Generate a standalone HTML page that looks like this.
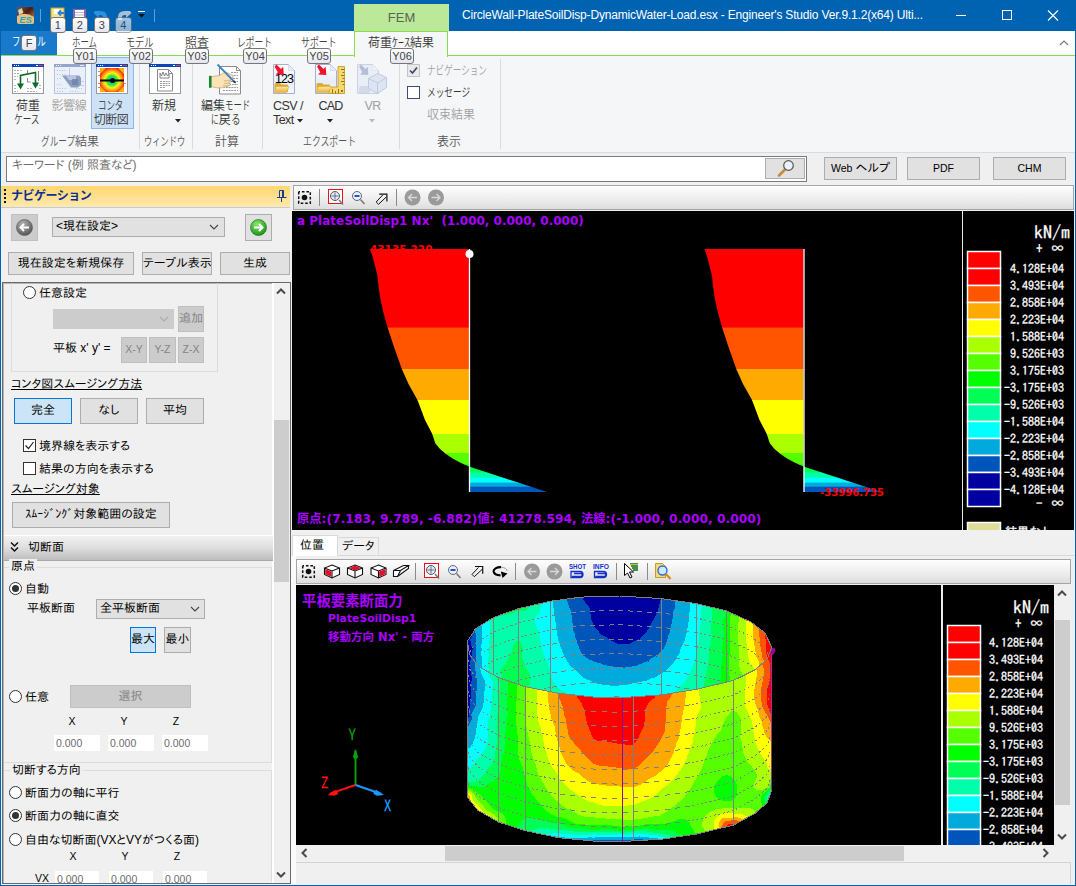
<!DOCTYPE html>
<html lang="ja">
<head>
<meta charset="utf-8">
<title>Engineer's Studio</title>
<style>
*{box-sizing:border-box;margin:0;padding:0}
html,body{width:1076px;height:886px;overflow:hidden;background:#f0f0f0}
body{position:relative;font-family:"Liberation Sans","Noto Sans CJK JP",sans-serif;font-size:12px;color:#000}
.a{position:absolute}
.ui{font-family:"Liberation Sans","IPAPGothic","IPAGothic","Noto Sans CJK JP",sans-serif;font-size:12px;white-space:nowrap}
.rb{font-family:"Liberation Sans","Noto Sans CJK JP",sans-serif;font-size:12px;white-space:nowrap}
.c{text-align:center}
.l{font-size:10.500px!important}
.btn{position:absolute;background:#e1e1e1;border:1px solid #adadad;text-align:center;white-space:nowrap;overflow:hidden}
.btn.sel{background:#cce4f7;border-color:#0078d7}
.btn.dis{background:#cccccc;border-color:#bfbfbf;color:#838383}
.kt{position:absolute;z-index:5;height:16px;border:1px solid #767676;border-radius:3px;background:linear-gradient(#ffffff,#e4e5f0);color:#444;font-size:11px;line-height:14px;text-align:center;font-family:"Liberation Sans",sans-serif}
.tab{position:absolute;font-weight:350;top:31px;height:24px;line-height:24.500px;font-size:12px;color:#444;white-space:nowrap}
.sep{position:absolute;top:59px;width:1px;height:90px;background:#dadbdc}
.gl{position:absolute;font-weight:350;top:134px;height:16px;line-height:16px;font-size:12px;color:#555;text-align:center;white-space:nowrap}
.lb{position:absolute;font-weight:350;font-size:12px;line-height:14px;text-align:center;color:#333;white-space:nowrap}
.lb.d{color:#a0a0a0}
.radio{position:absolute;width:13px;height:13px;border:1px solid #333;border-radius:50%;background:#fff}
.radio.on::after{content:"";position:absolute;left:2px;top:2px;width:7px;height:7px;border-radius:50%;background:#333}
.chk{position:absolute;width:13px;height:13px;border:1px solid #333;background:#fff}
.inp{position:absolute;background:#fff;color:#6d6d6d;height:16px;line-height:16px;padding-left:2px}
.grp{position:absolute;border:1px solid #dcdcdc}
.lg{font-family:"IPAGothic","Liberation Mono",monospace;color:#fff;white-space:pre;position:absolute;-webkit-text-stroke:.3px #fff}
.pt{font-family:"DejaVu Sans","Noto Sans CJK JP",sans-serif;font-weight:bold;color:#a0f;white-space:pre;position:absolute}
</style>
</head>
<body>
<!-- ===== title bar ===== -->
<div class="a" id="titlebar" style="left:0;top:0;width:1076px;height:31px;background:#0063b1"></div>
<div class="a" id="fem" style="left:354px;top:4px;width:95px;height:27px;background:#bce89a;color:#5a6654;font-size:13px;line-height:27px;text-align:center">FEM</div>
<div class="a rb" id="title" style="left:462px;top:7px;color:#fff;font-size:12px;letter-spacing:-.18px;line-height:16px">CircleWall-PlateSoilDisp-DynamicWater-Load.esx - Engineer's Studio Ver.9.1.2(x64) Ulti...</div>
<!-- app icon -->
<svg class="a" style="left:17px;top:7px" width="17" height="17" viewBox="0 0 17 17">
<defs><linearGradient id="ai" x1="0" y1="0" x2="1" y2="1"><stop offset="0" stop-color="#7a5a50"/><stop offset=".45" stop-color="#4a1a14"/><stop offset="1" stop-color="#d6a260"/></linearGradient></defs>
<rect x="0" y="0" width="17" height="17" rx="2.5" fill="url(#ai)"/>
<path d="M0 9 Q8 4 17 10 V15 Q17 17 15 17 H2 Q0 17 0 15Z" fill="#e9c07a"/>
<path d="M1 3 L5 1 L6 6 L2 8Z" fill="#cfcfcf"/><circle cx="5" cy="5" r="1.3" fill="#f5e04a"/>
<text x="8.5" y="15.5" font-family="Liberation Sans,sans-serif" font-size="9.5" font-weight="bold" font-style="italic" fill="#22a9c9" text-anchor="middle">ES</text>
</svg>
<div class="a" style="left:40px;top:9px;width:1px;height:13px;background:#5f9fd4"></div>
<!-- QAT icons -->
<svg class="a" style="left:50px;top:7px" width="90" height="16" viewBox="0 0 90 16">
<rect x="1" y="1" width="13" height="14" fill="#f7e28b" stroke="#caa53a" stroke-width="1"/><rect x="4" y="2" width="5" height="5" fill="#fff"/><path d="M15 6 H9 M11 3.5 L8.5 6 L11 8.5" stroke="#2b7fe0" stroke-width="2" fill="none"/>
<rect x="23" y="2" width="13" height="13" fill="#8e63c0"/><rect x="25" y="3" width="9" height="9" fill="#fff"/><path d="M25 5.5h9M25 8h9M25 10.5h9" stroke="#b9b9c9" stroke-width="1"/>
<path d="M45 4 L50 4 Q57 4 57 10 L57 13 L53 13 L53 10 Q53 8 50 8 L49 8 L49 11 L43.5 6Z" fill="#2f8fe0"/>
<path d="M80 4 L75 4 Q68 4 68 10 L68 13 L72 13 L72 10 Q72 8 75 8 L76 8 L76 11 L81.5 6Z" fill="#a9bfd6"/>
</svg>
<div class="kt" style="left:49.500px;top:16.500px;width:16.500px">1</div>
<div class="kt" style="left:71.500px;top:16.500px;width:16.500px">2</div>
<div class="kt" style="left:93.500px;top:16.500px;width:16.500px">3</div>
<div class="kt" style="left:115px;top:16.500px;width:16.500px;opacity:.62">4</div>
<svg class="a" style="left:137px;top:10px" width="10" height="10" viewBox="0 0 10 10"><path d="M1 1.5h7" stroke="#fff" stroke-width="1"/><path d="M1 4h7l-3.5 3.5z" fill="#111"/></svg>
<div class="a" style="left:154px;top:9px;width:1px;height:13px;background:#5f9fd4"></div>
<!-- window controls -->
<svg class="a" style="left:940px;top:0" width="136" height="31" viewBox="0 0 136 31">
<path d="M16 15.5h10" stroke="#fff" stroke-width="1"/>
<rect x="62.5" y="10.5" width="9" height="9" fill="none" stroke="#fff" stroke-width="1"/>
<path d="M108 10.5l10 10M118 10.5l-10 10" stroke="#fff" stroke-width="1.1"/>
</svg>
<!-- ===== ribbon tabs ===== -->
<div class="a" id="tabrow" style="left:1px;top:31px;width:1074px;height:24px;background:#fff"></div>
<div class="a" style="left:1px;top:55px;width:1074px;height:1px;background:#8add4a"></div>
<div class="a" id="ribbon" style="left:1px;top:56px;width:1074px;height:97px;background:#f5f6f7;border-bottom:1px solid #dadbdc"></div>
<div class="a" id="filetab" style="left:1px;top:31px;width:56px;height:24px;background:#1979ca;color:#fff;font-size:12px;line-height:23px;padding-left:11px;white-space:nowrap"><span style="display:inline-block;transform:scaleX(0.7);transform-origin:0 50%;margin-right:-14.4px">ファイル</span></div>
<div class="tab" style="left:72px"><span style="display:inline-block;transform:scaleX(0.7);transform-origin:0 50%;margin-right:-10.8px">ホーム</span></div>
<div class="tab" style="left:126px"><span style="display:inline-block;transform:scaleX(0.76);transform-origin:0 50%;margin-right:-8.6px">モデル</span></div>
<div class="tab" style="left:185px">照査</div>
<div class="tab" style="left:237px"><span style="display:inline-block;transform:scaleX(0.73);transform-origin:0 50%;margin-right:-13.0px">レポート</span></div>
<div class="tab" style="left:301px"><span style="display:inline-block;transform:scaleX(0.74);transform-origin:0 50%;margin-right:-12.5px">サポート</span></div>
<div class="a" id="acttab" style="left:354px;top:31px;width:94px;height:26px;background:#f5f6f7;border:1px solid #8add4a;border-bottom:none"></div>
<div class="a" style="left:355px;top:55px;width:92px;height:1px;background:#f5f6f7"></div>
<div class="tab" style="left:368px;color:#333">荷重ｹｰｽ結果</div>
<div class="kt" style="left:21px;top:35px;width:16px">F</div>
<div class="kt" style="left:73px;top:48px;width:24px">Y01</div>
<div class="kt" style="left:129px;top:48px;width:24px">Y02</div>
<div class="kt" style="left:185px;top:48px;width:24px">Y03</div>
<div class="kt" style="left:243px;top:48px;width:24px">Y04</div>
<div class="kt" style="left:307px;top:48px;width:24px">Y05</div>
<div class="kt" style="left:390px;top:48px;width:24px">Y06</div>
<svg class="a" style="left:1059px;top:39px" width="10" height="8" viewBox="0 0 10 8"><path d="M1 6l4-4 4 4" stroke="#777" stroke-width="1.2" fill="none"/></svg>
<!-- ===== ribbon body ===== -->
<div class="a" style="left:91px;top:57px;width:43px;height:72px;background:#cde2f6;border:1px solid #8db5e6"></div>
<!-- icon: load case -->
<svg class="a" style="left:12px;top:64px" width="32" height="30" viewBox="0 0 32 30">
<rect x=".5" y=".5" width="31" height="29" fill="#fff" stroke="#9a9a9a"/><rect x="0" y="0" width="32" height="3" fill="#0c46b8"/><rect x="27" y="1" width="4" height="1" fill="#f33"/><path d="M2 1.5h1M4 1.5h1M6 1.5h1M24 1.5h2" stroke="#fff" stroke-width="1"/>
<path d="M2 6.5h9M2 9.5h6M2 12.5h4M2 15.5h3M2 21.5h2M2 24.5h3M2 27.5h4M15 24.5h6M15 27.5h10M24 21.5h5M27 24.5h3" stroke="#b4b4b4" stroke-width="1" stroke-dasharray="2 1"/>
<path d="M15.5 6v4M26.5 7v10M15.5 14v4h3" stroke="#8a8a8a" stroke-width="1" fill="none"/>
<path d="M8.500 20V11.500L23.500 8.500V19" stroke="#0f6a25" stroke-width="1.6" fill="none"/>
<path d="M5 19.5h7L8.500 25.500zM20 18.500h7L23.500 24.500z" fill="#0f6a25"/>
</svg>
<!-- icon: influence line (disabled) -->
<svg class="a" style="left:54px;top:64px" width="32" height="30" viewBox="0 0 32 30">
<rect x=".5" y=".5" width="31" height="29" fill="#eaf0fb" stroke="#b9c3dc"/><rect x="0" y="0" width="32" height="3" fill="#95a5cb"/><path d="M2 1.5h1M4 1.5h1M6 1.5h1M26 1.5h4" stroke="#eef" stroke-width="1"/>
<path d="M3 6.500h9M3 10.500h9M3 14.500h4M3 20.500h5M3 24.500h10M3 27.500h7M16 27.500h10M22 24.500h6" stroke="#b6c2dd" stroke-width="1" stroke-dasharray="1 1.5"/>
<path d="M15.500 4v10M24 17.500h6M24 21.500h6" stroke="#c3cde6" stroke-width="1"/>
<path d="M8 11.500h17l2 2v7l-3 3h-7z" fill="#8d9dbd"/><path d="M12 12h10v4h-7z" fill="#b9c6df"/><rect x="18" y="15" width="6" height="6" fill="#6f82aa" opacity=".8"/>
</svg>
<!-- icon: contour section -->
<svg class="a" style="left:96px;top:64px" width="32" height="30" viewBox="0 0 32 30">
<defs><radialGradient id="cg" cx=".5" cy=".52" r=".62"><stop offset="0" stop-color="#0a2a8a"/><stop offset=".12" stop-color="#14c4d6"/><stop offset=".3" stop-color="#27e23a"/><stop offset=".5" stop-color="#f4f41a"/><stop offset=".68" stop-color="#ff9a10"/><stop offset=".86" stop-color="#ff2a10"/><stop offset="1" stop-color="#f01010"/></radialGradient></defs>
<rect x=".5" y=".5" width="31" height="29" fill="#fff" stroke="#9a9a9a"/><rect x="0" y="0" width="32" height="3" fill="#0c46b8"/><rect x="27" y="1" width="4" height="1" fill="#f33"/><path d="M2 1.5h1M4 1.5h1M6 1.5h1M24 1.5h2" stroke="#fff" stroke-width="1"/>
<rect x="4" y="4" width="24" height="24" fill="url(#cg)"/>
<path d="M4 4h6l-6 6zM28 4h-6l6 6zM4 28h6l-6-6zM28 28h-6l6-6z" fill="#ffe21a" opacity=".75"/>
<path d="M2 7.500h2M2 11.500h2M2 19.500h2M2 23.500h2M28 19.500h2" stroke="#999" stroke-width="1"/>
<path d="M4 16.500h24" stroke="#000" stroke-width="2"/><circle cx="16.500" cy="16.500" r="2.600" fill="#000"/>
</svg>
<!-- icon: new window -->
<svg class="a" style="left:149px;top:64px" width="32" height="30" viewBox="0 0 32 30">
<rect x=".5" y=".5" width="31" height="29" fill="#fff" stroke="#9a9a9a"/><rect x="0" y="0" width="32" height="3" fill="#0c46b8"/><rect x="27" y="1" width="4" height="1" fill="#f33"/><path d="M2 1.5h1M4 1.5h1M6 1.5h1M24 1.5h2" stroke="#fff" stroke-width="1"/>
<path d="M8.500 5.500h11l4 4v17.500h-15z" fill="#fff" stroke="#8a8a8a"/><path d="M19.500 5.500v4h4" fill="none" stroke="#8a8a8a"/>
<path d="M11 14v-5l1.500 3 1.500-4 1.500 4 1.500-3 1.500 3 1.500-2v4z" fill="none" stroke="#777" stroke-width=".9"/>
<path d="M11 17.500h10M11 19.500h10M11 21.500h10M11 23.500h5" stroke="#999" stroke-width="1" stroke-dasharray="2 .8"/>
</svg>
<!-- icon: edit mode (hand + doc) -->
<svg class="a" style="left:209px;top:63px" width="33" height="32" viewBox="0 0 33 32">
<path d="M10.500 3.500h17l4 4v23.500h-21z" fill="#fff" stroke="#8a8a8a"/><path d="M27.500 3.500v4h4" fill="none" stroke="#8a8a8a"/>
<path d="M22 9.500h7M22 12.500h7M24 15.500h5M22 18.500h7M20 21.500h9M14 24.500h15M14 27.500h15" stroke="#999" stroke-width="1" stroke-dasharray="2 .8"/>
<g transform="translate(0,1.300)"><path d="M2 12.500l9-1.500 5-3.500 8 3.500v3l-3 1v6l-7 2.500h-7l-5-1.500z" fill="#fbe3b5" stroke="#caa97a" stroke-width=".8"/>
<path d="M15 16.500h7M15 19h6M14 21.500h6" stroke="#caa97a" stroke-width=".8"/>
<rect x="0" y="11.500" width="2.500" height="12" fill="#118a2e"/></g>
<path d="M8.500 1.500L25.500 19" stroke="#3f86c4" stroke-width="1.800"/><path d="M24.500 18l2 2" stroke="#223" stroke-width="1.500"/>
</svg>
<!-- icon: CSV -->
<svg class="a" style="left:272px;top:63px" width="26" height="32" viewBox="0 0 26 32">
<defs><linearGradient id="dg" x1="0" y1="0" x2="0" y2="1"><stop offset="0" stop-color="#fff"/><stop offset=".6" stop-color="#e6edf9"/><stop offset="1" stop-color="#f6f9ff"/></linearGradient><linearGradient id="fg" x1="0" y1="0" x2="0" y2="1"><stop offset="0" stop-color="#fbe9a0"/><stop offset="1" stop-color="#e6b23a"/></linearGradient></defs>
<path d="M1.500 1.500h15l6 6v23h-21z" fill="url(#dg)" stroke="#a8add2"/><path d="M16.500 1.500v6h6z" fill="#e9eefc" stroke="#c8cde6" stroke-width=".6"/>
<path d="M2.500 3.500L4.500 1.500 9 6 11.200 3.800 11.800 12 3.600 11.400 5.800 9.200z" fill="#f0142c"/>
<text x="12" y="20" font-family="Liberation Sans,sans-serif" font-size="12.500" fill="#000" text-anchor="middle" letter-spacing="-.9">123</text>
<path d="M2.500 21.500q0-1.500 1.500-1.500h4l1.500 1.500h5.500q1 0 1 1v6.500h-13.500z" fill="#e0aa2e"/><path d="M4 23.500h13l-2.500 6h-12z" fill="url(#fg)" stroke="#d9a52c" stroke-width=".5"/>
</svg>
<!-- icon: CAD -->
<svg class="a" style="left:314px;top:63px" width="31" height="32" viewBox="0 0 31 32">
<path d="M1.500 1.500h15l6 6v23h-21z" fill="url(#dg)" stroke="#a8add2"/><path d="M16.500 1.500v6h6z" fill="#e9eefc" stroke="#c8cde6" stroke-width=".6"/>
<path d="M24 3.500h6.500v27h-15.500v-6.500h9z" fill="#f6d96e" stroke="#c79d2b" stroke-width=".9"/>
<path d="M27 6.500h3.500M28.500 9.500h2M27 12.500h3.500M28.500 15.500h2M27 18.500h3.500M28.500 21.500h2M18.500 26v4.500M21.500 28v2.500M24.500 26v4.500" stroke="#8a6a12" stroke-width=".9"/><circle cx="28" cy="28" r="1" fill="#6b5210"/>
<path d="M3 3.500L5 1.500 9.500 6 11.700 3.800 12.300 12 4.100 11.400 6.300 9.200z" fill="#f0142c"/>
<path d="M2.500 21.500q0-1.500 1.500-1.500h4l1.500 1.500h5.500q1 0 1 1v6.500h-13.500z" fill="#e0aa2e"/><path d="M4 23.500h13l-2.500 6h-12z" fill="url(#fg)" stroke="#d9a52c" stroke-width=".5"/>
</svg>
<!-- icon: VR (disabled) -->
<svg class="a" style="left:356px;top:63px" width="31" height="32" viewBox="0 0 31 32" opacity=".55">
<path d="M1.500 1.500h15l6 6v23h-21z" fill="#dfe7f6" stroke="#a8b4d2"/><path d="M16.500 1.500v6h6z" fill="#eef2fc" stroke="#c8cde6" stroke-width=".6"/>
<path d="M3 3.500L5 1.500 9.500 6 11.700 3.800 12.300 12 4.100 11.400 6.300 9.200z" fill="#7f93bb"/>
<path d="M4 23.500h11l-2 6h-10z" fill="#b9c6e0" stroke="#9fb0d0" stroke-width=".5"/>
<path d="M12.500 15.500l9-5 9 4v10l-9 6-9-5z" fill="#cdd8ee" stroke="#8fa2c8" stroke-width=".9"/><path d="M12.500 15.500l9 4.500 9-5.500M21.500 20v10.500" fill="none" stroke="#8fa2c8" stroke-width=".9"/>
</svg>
<!-- labels -->
<div class="lb" style="left:6px;top:99px;width:44px">荷重</div>
<div class="lb" style="left:14px;top:113px"><span style="display:inline-block;transform:scaleX(0.72);transform-origin:0 50%;margin-right:-10.1px">ケース</span></div>
<div class="lb d" style="left:51px;top:99px;width:36px;letter-spacing:-.3px">影響線</div>
<div class="lb" style="left:98px;top:99px"><span style="display:inline-block;transform:scaleX(0.7);transform-origin:0 50%;margin-right:-10.8px">コンタ</span></div>
<div class="lb" style="left:93px;top:113px;width:36px;letter-spacing:-.5px">切断図</div>
<div class="lb" style="left:148px;top:99px;width:32px">新規</div>
<div class="lb" style="left:201px;top:99px">編集<span style="display:inline-block;transform:scaleX(0.7);transform-origin:0 50%;margin-right:-10.8px">モード</span></div>
<div class="lb" style="left:211px;top:113px"><span style="display:inline-block;transform:scaleX(0.65);transform-origin:0 50%;margin-right:-4.2px">に</span>戻<span style="display:inline-block;transform:scaleX(0.8);transform-origin:0 50%;margin-right:-2.4px">る</span></div>
<div class="lb" style="left:273px;top:99px;font-size:12.500px;letter-spacing:-.55px">CSV /</div>
<div class="lb" style="left:273px;top:113px;font-size:12.500px;letter-spacing:-.55px">Text</div>
<div class="lb" style="left:318.500px;top:99px;font-size:12.500px;letter-spacing:-.8px">CAD</div>
<div class="lb d" style="left:364.500px;top:99px;font-size:12.500px;letter-spacing:-.6px">VR</div>
<svg class="a" style="left:174px;top:118px" width="8" height="5" viewBox="0 0 8 5"><path d="M1 1h6l-3 3.500z" fill="#222"/></svg>
<svg class="a" style="left:296px;top:118px" width="8" height="5" viewBox="0 0 8 5"><path d="M1 1h6l-3 3.500z" fill="#222"/></svg>
<svg class="a" style="left:326px;top:118px" width="8" height="5" viewBox="0 0 8 5"><path d="M1 1h6l-3 3.500z" fill="#222"/></svg>
<svg class="a" style="left:368px;top:118px" width="8" height="5" viewBox="0 0 8 5"><path d="M1 1h6l-3 3.500z" fill="#bbb"/></svg>
<!-- group separators + labels -->
<div class="sep" style="left:139px"></div><div class="sep" style="left:192px"></div><div class="sep" style="left:262px"></div><div class="sep" style="left:399px"></div><div class="sep" style="left:500px"></div>
<div class="gl" style="left:41px"><span style="display:inline-block;transform:scaleX(0.72);transform-origin:0 50%;margin-right:-13.4px">グループ</span>結果</div>
<div class="gl" style="left:144px"><span style="display:inline-block;transform:scaleX(0.69);transform-origin:0 50%;margin-right:-18.6px">ウィンドウ</span></div>
<div class="gl" style="left:215px">計算</div>
<div class="gl" style="left:303px"><span style="display:inline-block;transform:scaleX(0.74);transform-origin:0 50%;margin-right:-18.7px">エクスポート</span></div>
<div class="gl" style="left:437px">表示</div>
<!-- checkboxes -->
<div class="a" style="left:407px;top:64px;width:13px;height:13px;border:1px solid #c4c4c4;background:#e9e9e9"></div>
<svg class="a" style="left:408px;top:65px" width="11" height="11" viewBox="0 0 11 11"><path d="M2 5.500l2.500 2.500 4.500-5.500" stroke="#3d4a66" stroke-width="1.700" fill="none"/></svg>
<div class="lb d" style="left:427px;top:64px"><span style="display:inline-block;transform:scaleX(0.715);transform-origin:0 50%;margin-right:-23.9px">ナビゲーション</span></div>
<div class="a" style="left:407px;top:86px;width:13px;height:13px;border:1px solid #3d4a7a;background:#fff"></div>
<div class="lb" style="left:427px;top:86px"><span style="display:inline-block;transform:scaleX(0.72);transform-origin:0 50%;margin-right:-16.8px">メッセージ</span></div>
<div class="lb d" style="left:427px;top:108px">収束結果</div>
<!-- ===== search row ===== -->
<div class="a" style="left:1px;top:153px;width:1074px;height:33px;background:#f0f0f0"></div>
<div class="a ui" style="left:6px;top:156px;width:801px;height:26px;background:#fff;border:1px solid #7a7a7a;color:#6d6d6d;line-height:17px;padding-left:5px">キーワード (例 照査など)</div>
<div class="btn" style="left:765px;top:158px;width:40px;height:21px"></div>
<svg class="a" style="left:776px;top:159px" width="20" height="19" viewBox="0 0 20 19"><path d="M3 16.500L9.500 10" stroke="#c98a3c" stroke-width="2.600" stroke-linecap="round"/><circle cx="12.500" cy="6.500" r="4.800" fill="#e9f4ff" stroke="#555" stroke-width="1.200"/></svg>
<div class="btn ui" style="left:824px;top:157px;width:73px;height:23px;line-height:20px"><span class="l">Web</span> ヘルプ</div>
<div class="btn ui l" style="left:907px;top:157px;width:73px;height:23px;line-height:20px">PDF</div>
<div class="btn ui l" style="left:993px;top:157px;width:73px;height:23px;line-height:20px">CHM</div>
<!-- ===== navigation panel ===== -->
<div class="a" style="left:1px;top:186px;width:289px;height:22px;background:linear-gradient(#ffd76e,#ffe9ad);border-bottom:1px solid #c5cbd6"></div>
<div class="a" style="left:4px;top:189px;width:2px;height:14px;background:repeating-linear-gradient(#111 0 2px,transparent 2px 4px)"></div>
<div class="a" style="left:11px;top:187px;color:#0a2f96;font-weight:bold;font-size:12px;line-height:19px;white-space:nowrap;font-family:'Liberation Sans','Noto Sans CJK JP',sans-serif;letter-spacing:-.5px">ナビゲーション</div>
<svg class="a" style="left:277px;top:189px" width="10" height="13" viewBox="0 0 10 13"><path d="M2.500 1.500h4v7h-4zM0 8.500h9.500M4.500 8.500v4.500" stroke="#1a3a9a" stroke-width="1" fill="none"/><path d="M5.700 1.500v7" stroke="#1a3a9a" stroke-width="1.400"/></svg>
<!-- row 1 -->
<div class="a" style="left:11px;top:214px;width:27px;height:27px;background:#cccccc;border:1px solid #c0c0c0"></div>
<svg class="a" style="left:16px;top:219px" width="17" height="17" viewBox="0 0 17 17"><defs><radialGradient id="gb" cx=".4" cy=".3" r=".8"><stop offset="0" stop-color="#b5b5b5"/><stop offset="1" stop-color="#4a4a4a"/></radialGradient><radialGradient id="gg" cx=".4" cy=".3" r=".8"><stop offset="0" stop-color="#8be66a"/><stop offset="1" stop-color="#0e8a12"/></radialGradient></defs><circle cx="8.500" cy="8.500" r="8" fill="url(#gb)" stroke="#555" stroke-width=".6"/><path d="M13 8.500H5M8 5L4.500 8.500 8 12" stroke="#fff" stroke-width="2" fill="none"/></svg>
<div class="btn ui" style="left:52px;top:217px;width:173px;height:20px;text-align:left;padding-left:3px;line-height:17px">&lt;現在設定&gt;</div>
<svg class="a" style="left:209px;top:224px" width="10" height="6" viewBox="0 0 10 6"><path d="M1 1l4 4 4-4" stroke="#444" stroke-width="1.100" fill="none"/></svg>
<div class="btn" style="left:245px;top:214px;width:27px;height:27px"></div>
<svg class="a" style="left:250px;top:219px" width="17" height="17" viewBox="0 0 17 17"><circle cx="8.500" cy="8.500" r="8" fill="url(#gg)" stroke="#0c6a10" stroke-width=".6"/><path d="M4 8.500h8M9 5l3.500 3.500L9 12" stroke="#fff" stroke-width="2" fill="none"/></svg>
<!-- row 2 -->
<div class="btn ui" style="left:8px;top:252px;width:126px;height:23px;line-height:20px">現在設定を新規保存</div>
<div class="btn ui" style="left:142px;top:252px;width:70px;height:23px;line-height:20px">テーブル表示</div>
<div class="btn ui" style="left:220px;top:252px;width:70px;height:23px;line-height:20px">生成</div>
<!-- scroll area -->
<div class="a" style="left:2px;top:282px;width:289px;height:602px;border:1px solid #696969;background:#f0f0f0;box-shadow:inset 1px 1px 0 #b4b4b4"></div>
<div class="a" style="left:272px;top:283px;width:2px;height:600px;background:#fff"></div><div class="a" style="left:274px;top:283px;width:16px;height:600px;background:#f0f0f0"></div>
<div class="a" style="left:274px;top:420px;width:15px;height:162px;background:#cdcdcd"></div>
<svg class="a" style="left:276px;top:288px" width="10" height="7" viewBox="0 0 10 7"><path d="M1 5.500l4-4 4 4" stroke="#4a4a4a" stroke-width="2" fill="none"/></svg>
<svg class="a" style="left:276px;top:871px" width="10" height="7" viewBox="0 0 10 7"><path d="M1 1.500l4 4 4-4" stroke="#4a4a4a" stroke-width="2" fill="none"/></svg>
<!-- group (cut-off) -->
<div class="grp" style="left:11px;top:270px;width:207px;height:102px;border-top:none;clip-path:inset(13px 0 0 0)"></div>
<div class="radio" style="left:23px;top:286px"></div>
<div class="a ui" style="left:39px;top:286px;line-height:14px">任意設定</div>
<div class="btn dis" style="left:53px;top:309px;width:121px;height:20px;border-color:#ccc"></div>
<svg class="a" style="left:159px;top:316px" width="10" height="6" viewBox="0 0 10 6"><path d="M1 1l4 4 4-4" stroke="#aaa" stroke-width="1.100" fill="none"/></svg>
<div class="btn dis ui" style="left:178px;top:306px;width:26px;height:26px;line-height:23px">追加</div>
<div class="a ui" style="left:53px;top:341px;line-height:14px">平板 x' y' =</div>
<div class="btn dis ui l" style="left:121px;top:337px;width:26px;height:26px;line-height:23px">X-Y</div>
<div class="btn dis ui l" style="left:149px;top:337px;width:27px;height:26px;line-height:23px">Y-Z</div>
<div class="btn dis ui l" style="left:178px;top:337px;width:26px;height:26px;line-height:23px">Z-X</div>
<div class="a ui" style="left:11px;top:377px;line-height:14px;text-decoration:underline">コンタ図スムージング方法</div>
<div class="btn sel ui" style="left:14px;top:398px;width:58px;height:26px;line-height:23px">完全</div>
<div class="btn ui" style="left:80px;top:398px;width:58px;height:26px;line-height:23px">なし</div>
<div class="btn ui" style="left:146px;top:398px;width:58px;height:26px;line-height:23px">平均</div>
<div class="chk" style="left:23px;top:439px"></div>
<svg class="a" style="left:24px;top:440px" width="11" height="11" viewBox="0 0 11 11"><path d="M1.500 5.500l3 3 5-6.500" stroke="#222" stroke-width="1.200" fill="none"/></svg>
<div class="a ui" style="left:39px;top:439px;line-height:14px">境界線を表示する</div>
<div class="chk" style="left:23px;top:462px"></div>
<div class="a ui" style="left:39px;top:462px;line-height:14px">結果の方向を表示する</div>
<div class="a ui" style="left:11px;top:482px;line-height:14px;text-decoration:underline">スムージング対象</div>
<div class="btn ui" style="left:12px;top:502px;width:158px;height:26px;line-height:23px">ｽﾑｰｼﾞﾝｸﾞ対象範囲の設定</div>
<!-- section header -->
<div class="a" style="left:4px;top:535px;width:269px;height:26px;background:linear-gradient(#f1f1f1,#dedede 50%,#bdbdbd);border-top:1px solid #fff;border-bottom:1px solid #a9a9a9"></div>
<svg class="a" style="left:10px;top:541px" width="9" height="12" viewBox="0 0 9 12"><path d="M1 1.500l3.500 3.500 3.500-3.500M1 6.500l3.500 3.500 3.500-3.500" stroke="#111" stroke-width="1.500" fill="none"/></svg>
<div class="a ui" style="left:28px;top:540px;line-height:14px">切断面</div>
<!-- group: origin -->
<div class="grp" style="left:4px;top:567px;width:268px;height:196px;border-left:none"></div>
<div class="a ui" style="left:9px;top:559px;line-height:14px;background:#f0f0f0;padding:0 2px">原点</div>
<div class="radio on" style="left:9px;top:582px"></div>
<div class="a ui" style="left:25px;top:582px;line-height:14px">自動</div>
<div class="a ui" style="left:27px;top:601px;line-height:14px">平板断面</div>
<div class="btn ui" style="left:96px;top:599px;width:109px;height:20px;text-align:left;padding-left:3px;line-height:17px">全平板断面</div>
<svg class="a" style="left:190px;top:606px" width="10" height="6" viewBox="0 0 10 6"><path d="M1 1l4 4 4-4" stroke="#444" stroke-width="1.100" fill="none"/></svg>
<div class="btn sel ui" style="left:130px;top:627px;width:26px;height:26px;line-height:23px">最大</div>
<div class="btn ui" style="left:164px;top:627px;width:27px;height:26px;line-height:23px">最小</div>
<div class="radio" style="left:9px;top:690px"></div>
<div class="a ui" style="left:25px;top:690px;line-height:14px">任意</div>
<div class="btn dis ui" style="left:70px;top:685px;width:121px;height:23px;line-height:20px">選択</div>
<div class="a ui c l" style="left:62px;top:714px;width:20px;line-height:14px">X</div>
<div class="a ui c l" style="left:114px;top:714px;width:20px;line-height:14px">Y</div>
<div class="a ui c l" style="left:166px;top:714px;width:20px;line-height:14px">Z</div>
<div class="inp ui l" style="left:54px;top:735px;width:46px">0.000</div>
<div class="inp ui l" style="left:108px;top:735px;width:46px">0.000</div>
<div class="inp ui l" style="left:162px;top:735px;width:46px">0.000</div>
<!-- group: direction -->
<div class="grp" style="left:4px;top:770px;width:268px;height:120px;border-left:none;border-bottom:none;clip-path:inset(0 0 8px 0)"></div>
<div class="a ui" style="left:10px;top:763px;line-height:14px;background:#f0f0f0;padding:0 2px">切断する方向</div>
<div class="radio" style="left:9px;top:786px"></div>
<div class="a ui" style="left:25px;top:786px;line-height:14px">断面力の軸に平行</div>
<div class="radio on" style="left:9px;top:809px"></div>
<div class="a ui" style="left:25px;top:809px;line-height:14px">断面力の軸に直交</div>
<div class="radio" style="left:9px;top:833px"></div>
<div class="a ui" style="left:25px;top:833px;line-height:14px">自由な切断面(VXとVYがつくる面)</div>
<div class="a ui c l" style="left:63px;top:849px;width:20px;line-height:14px">X</div>
<div class="a ui c l" style="left:115px;top:849px;width:20px;line-height:14px">Y</div>
<div class="a ui c l" style="left:167px;top:849px;width:20px;line-height:14px">Z</div>
<div class="a ui l" style="left:35px;top:871px;line-height:14px">VX</div>
<div class="inp ui l" style="left:55px;top:871px;width:44px;height:12px;overflow:hidden">0.000</div>
<div class="inp ui l" style="left:109px;top:871px;width:44px;height:12px;overflow:hidden">0.000</div>
<div class="inp ui l" style="left:163px;top:871px;width:44px;height:12px;overflow:hidden">0.000</div>
<div class="a" style="left:1px;top:884px;width:290px;height:1px;background:#f0f0f0"></div>
<!-- ===== top view ===== -->
<div class="a" style="left:293px;top:185px;width:781px;height:25px;background:linear-gradient(#fefefe,#ececec 60%,#dedede);border:1px solid #a5a5a5"></div>
<svg class="a" style="left:293px;top:186px" width="160" height="23" viewBox="0 0 160 23">
<rect x="5.700" y="5.700" width="11.600" height="11.600" fill="none" stroke="#111" stroke-width="1.500" stroke-dasharray="2.600 1.900" stroke-dashoffset="1.300"/><circle cx="11.500" cy="11.500" r="2.800" fill="#111"/>
<path d="M26.500 3v17M103.500 3v17" stroke="#8a8a8a"/>
<rect x="35.500" y="3.500" width="14" height="14" fill="#fff" stroke="#e11"/><circle cx="42" cy="10" r="4.500" fill="#dfeaf6" stroke="#556" stroke-width="1"/><path d="M42 6.500v7M38.500 10h7" stroke="#556" stroke-width=".8"/><path d="M46 14l4 4.500" stroke="#777" stroke-width="1.500"/>
<circle cx="64" cy="10" r="4.500" fill="#e8f0fa" stroke="#667" stroke-width="1"/><path d="M61.500 10h5" stroke="#1540c0" stroke-width="1.800"/><path d="M67.500 13.500l4 4.500" stroke="#777" stroke-width="1.500"/>
<g transform="translate(-92.800,1.600)"><path d="M176 14.400L182.500 7.400M178.300 16.700L186.200 9.300M176 14.400l2.300 2.300" stroke="#111" stroke-width="1" fill="none"/><path d="M179 6.500h7.700v7.300" stroke="#111" stroke-width="1.200" fill="none"/></g>
<circle cx="119.500" cy="11.500" r="8" fill="#9a9a9a"/><path d="M124 11.500h-8M119 8l-3.500 3.500 3.500 3.500" stroke="#d9d9d9" stroke-width="1.300" fill="none"/>
<circle cx="143" cy="11.500" r="8" fill="#9a9a9a"/><path d="M138.500 11.500h8M143.500 8l3.500 3.500-3.500 3.500" stroke="#d9d9d9" stroke-width="1.300" fill="none"/>
</svg>
<div class="a" style="left:292px;top:211px;width:670px;height:319px;background:#000"></div>
<svg class="a" style="left:292px;top:211px" width="670" height="319" viewBox="0 0 670 319"><text x="78" y="42" font-family="DejaVu Sans,sans-serif" font-weight="bold" font-size="10.500" fill="#f00">43135.220</text><clipPath id="cal"><path d="M78.1 38.0 L81.0 47.0 L85.4 64.5 L86.5 75.0 L88.2 87.0 L91.5 102.0 L95.6 116.6 L102.0 136.0 L109.8 158.0 L116.5 173.0 L125.5 189.0 L133.0 209.0 L140.3 223.0 L142.5 230.0 L143.5 232.5 L148.0 238.0 L154.0 243.0 L160.6 247.5 L168.0 251.5 L177.0 255.6 L177.0 38Z"/></clipPath><clipPath id="car"><path d="M177.0 255.6 L255.0 281 L177.0 281Z"/></clipPath><g clip-path="url(#cal)"><rect x="68" y="38.0" width="112" height="79.2" fill="#ff0000"/><rect x="68" y="116.6" width="112" height="42.0" fill="#ff5500"/><rect x="68" y="158.0" width="112" height="31.6" fill="#ffaa00"/><rect x="68" y="189.0" width="112" height="34.6" fill="#ffff00"/><rect x="68" y="223.0" width="112" height="19.6" fill="#aaff00"/><rect x="68" y="242.0" width="112" height="12.1" fill="#55ff00"/><rect x="68" y="253.5" width="112" height="4.1" fill="#00ff00"/></g><g clip-path="url(#car)"><rect x="177.0" y="255.6" width="82" height="6.5" fill="#00ff55"/><rect x="177.0" y="261.5" width="82" height="5.9" fill="#00ffaa"/><rect x="177.0" y="266.8" width="82" height="5.4" fill="#00ffff"/><rect x="177.0" y="271.6" width="82" height="4.7" fill="#00aadd"/><rect x="177.0" y="275.7" width="82" height="5.9" fill="#0055bb"/></g><path d="M177.5 38V281" stroke="#fff" stroke-width="1.300"/><clipPath id="cbl"><path d="M412.6 38.0 L415.5 47.0 L419.9 64.5 L421.0 75.0 L422.7 87.0 L426.0 102.0 L430.1 116.6 L436.5 136.0 L444.3 158.0 L451.0 173.0 L460.0 189.0 L467.5 209.0 L474.8 223.0 L477.0 230.0 L478.0 232.5 L482.5 238.0 L488.5 243.0 L495.1 247.5 L502.5 251.5 L511.5 255.6 L511.5 38Z"/></clipPath><clipPath id="cbr"><path d="M511.5 255.6 L589.5 281 L511.5 281Z"/></clipPath><g clip-path="url(#cbl)"><rect x="402.5" y="38.0" width="112" height="79.2" fill="#ff0000"/><rect x="402.5" y="116.6" width="112" height="42.0" fill="#ff5500"/><rect x="402.5" y="158.0" width="112" height="31.6" fill="#ffaa00"/><rect x="402.5" y="189.0" width="112" height="34.6" fill="#ffff00"/><rect x="402.5" y="223.0" width="112" height="19.6" fill="#aaff00"/><rect x="402.5" y="242.0" width="112" height="12.1" fill="#55ff00"/><rect x="402.5" y="253.5" width="112" height="4.1" fill="#00ff00"/></g><g clip-path="url(#cbr)"><rect x="511.5" y="255.6" width="82" height="6.5" fill="#00ff55"/><rect x="511.5" y="261.5" width="82" height="5.9" fill="#00ffaa"/><rect x="511.5" y="266.8" width="82" height="5.4" fill="#00ffff"/><rect x="511.5" y="271.6" width="82" height="4.7" fill="#00aadd"/><rect x="511.5" y="275.7" width="82" height="5.9" fill="#0055bb"/></g><path d="M512.0 38V281" stroke="#fff" stroke-width="1.300"/><circle cx="177.5" cy="43" r="4" fill="#fff"/><text x="528" y="285" font-family="DejaVu Sans,sans-serif" font-weight="bold" font-size="10.500" fill="#f00" textLength="64" lengthAdjust="spacingAndGlyphs">-33996.735</text></svg>
<div class="pt" style="left:297px;top:213px;font-size:12px;line-height:16px">a PlateSoilDisp1 Nx'  (1.000, 0.000, 0.000)</div>
<div class="pt" style="left:297px;top:511px;font-size:12.300px;line-height:16px">原点:(7.183, 9.789, -6.882)値: 41278.594, 法線:(-1.000, 0.000, 0.000)</div>
<div class="a" style="left:962px;top:211px;width:112px;height:319px;background:#000;border-left:1px solid #e8e8e8;overflow:hidden"><svg class="a" style="left:0;top:0" width="111" height="319" viewBox="0 0 111 319"><rect x="4.5" y="40.5" width="33" height="17" fill="#ff0000" stroke="#fff" stroke-width="1.500"/><rect x="4.5" y="57.5" width="33" height="17" fill="#ff0000" stroke="#fff" stroke-width="1.500"/><rect x="4.5" y="74.5" width="33" height="17" fill="#ff5500" stroke="#fff" stroke-width="1.500"/><rect x="4.5" y="91.5" width="33" height="17" fill="#ffaa00" stroke="#fff" stroke-width="1.500"/><rect x="4.5" y="108.5" width="33" height="17" fill="#ffff00" stroke="#fff" stroke-width="1.500"/><rect x="4.5" y="125.5" width="33" height="17" fill="#aaff00" stroke="#fff" stroke-width="1.500"/><rect x="4.5" y="142.5" width="33" height="17" fill="#55ff00" stroke="#fff" stroke-width="1.500"/><rect x="4.5" y="159.5" width="33" height="17" fill="#00ff00" stroke="#fff" stroke-width="1.500"/><rect x="4.5" y="176.5" width="33" height="17" fill="#00ff55" stroke="#fff" stroke-width="1.500"/><rect x="4.5" y="193.5" width="33" height="17" fill="#00ffaa" stroke="#fff" stroke-width="1.500"/><rect x="4.5" y="210.5" width="33" height="17" fill="#00ffff" stroke="#fff" stroke-width="1.500"/><rect x="4.5" y="227.5" width="33" height="17" fill="#00aadd" stroke="#fff" stroke-width="1.500"/><rect x="4.5" y="244.5" width="33" height="17" fill="#0055bb" stroke="#fff" stroke-width="1.500"/><rect x="4.5" y="261.5" width="33" height="17" fill="#0000a0" stroke="#fff" stroke-width="1.500"/><rect x="4.5" y="278.5" width="33" height="17" fill="#0000a0" stroke="#fff" stroke-width="1.500"/><rect x="4.500" y="311.500" width="33" height="17" fill="#dddd99" stroke="#fff" stroke-width="1.500"/></svg><div class="lg" style="right:4px;top:12px;font-size:18px;line-height:18px;transform:scaleX(1);transform-origin:100% 0">kN/m</div><div class="lg" style="left:73px;top:32px;font-size:13px;line-height:12px">+</div><div class="lg" style="left:88px;top:32px;font-size:13px;line-height:12px">∞</div><div class="lg" style="right:10px;top:51px;font-size:12px;line-height:12px">4.128E+04</div><div class="lg" style="right:10px;top:68px;font-size:12px;line-height:12px">3.493E+04</div><div class="lg" style="right:10px;top:85px;font-size:12px;line-height:12px">2.858E+04</div><div class="lg" style="right:10px;top:102px;font-size:12px;line-height:12px">2.223E+04</div><div class="lg" style="right:10px;top:119px;font-size:12px;line-height:12px">1.588E+04</div><div class="lg" style="right:10px;top:136px;font-size:12px;line-height:12px">9.526E+03</div><div class="lg" style="right:10px;top:153px;font-size:12px;line-height:12px">3.175E+03</div><div class="lg" style="right:10px;top:170px;font-size:12px;line-height:12px">-3.175E+03</div><div class="lg" style="right:10px;top:187px;font-size:12px;line-height:12px">-9.526E+03</div><div class="lg" style="right:10px;top:204px;font-size:12px;line-height:12px">-1.588E+04</div><div class="lg" style="right:10px;top:221px;font-size:12px;line-height:12px">-2.223E+04</div><div class="lg" style="right:10px;top:238px;font-size:12px;line-height:12px">-2.858E+04</div><div class="lg" style="right:10px;top:255px;font-size:12px;line-height:12px">-3.493E+04</div><div class="lg" style="right:10px;top:272px;font-size:12px;line-height:12px">-4.128E+04</div><div class="lg" style="left:73px;top:287px;font-size:13px;line-height:12px">−</div><div class="lg" style="left:88px;top:287px;font-size:13px;line-height:12px">∞</div><div class="lg" style="left:42px;top:314px;font-size:12px;line-height:12px;font-family:IPAGothic,'Noto Sans CJK JP',monospace">結果なし</div></div>
<!-- ===== bottom view ===== -->
<div class="a" style="left:292px;top:530px;width:783px;height:355px;background:#f0f0f0"></div>
<div class="a" style="left:291px;top:556px;width:5px;height:328px;background:#fafafa"></div>
<div class="a" style="left:292px;top:555px;width:782px;height:1px;background:#d9d9d9"></div>
<div class="a ui" style="left:292px;top:535px;width:46px;height:21px;background:#fff;border:1px solid #d9d9d9;border-bottom:none;line-height:19px;padding-left:7px">位置</div>
<div class="a ui" style="left:338px;top:537px;width:41px;height:18px;background:#f0f0f0;border:1px solid #d9d9d9;border-bottom:none;border-left:none;line-height:17px;padding-left:4px">データ</div>
<div class="a" style="left:296px;top:559px;width:775px;height:25px;background:linear-gradient(#fefefe,#ececec 60%,#dedede);border:1px solid #a5a5a5"></div>
<svg class="a" style="left:296px;top:560px" width="380" height="23" viewBox="0 0 380 23">
<defs><g id="cube"><path d="M8 .5L15.500 3.500V10L8 13.500L.5 10V3.500Z" fill="#fff" stroke="#111" stroke-width="1.100"/><path d="M.5 3.500L8 6.500L15.500 3.500M8 6.500V13.500" fill="none" stroke="#111" stroke-width="1.100"/></g></defs>
<rect x="6.700" y="5.700" width="11.600" height="11.600" fill="none" stroke="#111" stroke-width="1.500" stroke-dasharray="2.600 1.900" stroke-dashoffset="1.300"/><circle cx="12.500" cy="11.500" r="2.800" fill="#111"/>
<g transform="translate(28,4.500)"><use href="#cube"/><path d="M1.200 4.600L7.400 7.100V12.500L1.200 9.600Z" fill="#e0102c"/></g>
<g transform="translate(51,4.500)"><use href="#cube"/><path d="M8 1.300L14 3.600L8 5.900L2 3.600Z" fill="#e0102c"/></g>
<g transform="translate(74.500,4.500)"><use href="#cube"/><path d="M8.600 7.100L14.800 4.600V9.600L8.600 12.500Z" fill="#e0102c"/></g>
<path d="M97.500 10.500l10-5h5l-8 5zM97.500 10.500v6h4l3-6M101.500 16.500l11-8v-3" fill="#fff" stroke="#111" stroke-width="1.100"/>
<path d="M119.500 3v17M219.500 3v17M320.500 3v17M351.500 3v17" stroke="#8a8a8a"/>
<rect x="128.500" y="3.500" width="14" height="14" fill="#fff" stroke="#e11"/><circle cx="135" cy="10" r="4.500" fill="#dfeaf6" stroke="#556" stroke-width="1"/><path d="M135 6.500v7M131.500 10h7" stroke="#556" stroke-width=".8"/><path d="M139 14l4 4.500" stroke="#777" stroke-width="1.500"/>
<circle cx="157" cy="10" r="4.500" fill="#e8f0fa" stroke="#667" stroke-width="1"/><path d="M154.500 10h5" stroke="#1540c0" stroke-width="1.800"/><path d="M160.500 13.500l4 4.500" stroke="#777" stroke-width="1.500"/>
<path d="M176 14.400L182.500 7.400M178.300 16.700L186.200 9.300M176 14.400l2.300 2.300" stroke="#111" stroke-width="1" fill="none"/><path d="M179 6.500h7.700v7.300" stroke="#111" stroke-width="1.200" fill="none"/>
<path d="M205 7.200A7 4 0 0 0 197.600 11.500Q198.500 15.300 204.500 15.300" stroke="#000" stroke-width="2.200" fill="none"/><path d="M205 7.200A7 4 0 0 1 211 11" stroke="#9a9a9a" stroke-width="1" fill="none"/><path d="M204.800 11.400L211.500 13.600 206.500 18z" fill="#000"/>
<circle cx="236" cy="11.500" r="8" fill="#9a9a9a"/><path d="M240.500 11.500h-8M235.500 8l-3.500 3.500 3.500 3.500" stroke="#d9d9d9" stroke-width="1.300" fill="none"/>
<circle cx="258.500" cy="11.500" r="8" fill="#9a9a9a"/><path d="M254 11.500h8M259 8l3.500 3.500-3.500 3.500" stroke="#d9d9d9" stroke-width="1.300" fill="none"/>
<text x="273" y="9" font-family="Liberation Sans,sans-serif" font-weight="bold" font-size="7.500" fill="#1030c8" textLength="17" lengthAdjust="spacingAndGlyphs">SHOT</text>
<path d="M275 11.500h9q3 0 3 3t-3 3h-9zM278 13.500h8v3h-10" fill="none" stroke="#1030c8" stroke-width="1.300"/>
<text x="297" y="9" font-family="Liberation Sans,sans-serif" font-weight="bold" font-size="7.500" fill="#1030c8" textLength="16" lengthAdjust="spacingAndGlyphs">INFO</text>
<path d="M298.500 11.500h9q3 0 3 3t-3 3h-9zM301.500 13.500h8v3h-10" fill="none" stroke="#1030c8" stroke-width="1.300"/>
<path d="M334 4h8M335 6h7M336 8h6M337 10h5" stroke="#0b6a20" stroke-width="1.300"/><path d="M334 4.500h8" stroke="#d8c21a" stroke-width="1"/>
<path d="M328.500 3.500v12l3-2.500 2.500 5 2-1-2.500-5h4z" fill="#fff" stroke="#000" stroke-width="1"/>
<path d="M359.500 3.500h7l3 3v11h-10z" fill="#f6d77a" stroke="#c99a2a"/><circle cx="366.500" cy="10.500" r="4.500" fill="#cfe8ff" stroke="#2f6fd0" stroke-width="1.400"/><path d="M370 14l4.500 5" stroke="#d98a1a" stroke-width="2.200"/>
</svg>
<div class="a" style="left:296px;top:585px;width:645px;height:260px;background:#000"></div>
<svg class="a" style="left:296px;top:585px" width="645" height="260" viewBox="0 0 645 260"><clipPath id="cyi"><path d="M171.4 56.3 L179.6 43.7 L197.5 32.5 L222.7 23.6 L254.7 16.2 L285.2 12.1 L324.0 11.0 L365.6 13.6 L400.6 18.7 L430.3 25.8 L454.9 37.0 L469.0 48.1 L475.7 62.2 L471.2 74.1 L459.3 84.6 L437.8 95.3 L400.6 104.3 L365.6 109.8 L324.0 112.8 L297.8 112.1 L262.9 108.3 L229.4 101.7 L202.7 92.7 L182.6 81.6 L173.7 69.7Z"/></clipPath><g clip-path="url(#cyi)" shape-rendering="crispEdges"><path d="M171.4 56.3 L179.6 43.7 L197.5 32.5 L222.7 23.6 L254.7 16.2 L285.2 12.1 L324.0 11.0 L365.6 13.6 L400.6 18.7 L430.3 25.8 L454.9 37.0 L469.0 48.1 L475.7 62.2 L471.2 74.1 L459.3 84.6 L437.8 95.3 L400.6 104.3 L365.6 109.8 L324.0 112.8 L297.8 112.1 L262.9 108.3 L229.4 101.7 L202.7 92.7 L182.6 81.6 L173.7 69.7Z" fill="#0000a0"/><path d="M174.5 55.5 175.5 56.5 175.5 59.5 177.5 64.5 176.5 66.5 176.5 72.5 175.5 73.5 177.5 77.5 183.5 84.5 192.5 88.5 194.5 90.5 204.5 95.5 206.5 95.5 207.5 96.5 215.5 98.5 218.5 100.5 220.5 100.5 227.5 103.5 230.5 103.5 231.5 104.5 236.5 104.5 237.5 105.5 242.5 105.5 243.5 106.5 253.5 107.5 254.5 108.5 259.5 108.5 260.5 109.5 266.5 109.5 267.5 110.5 275.5 110.5 276.5 111.5 292.5 112.5 293.5 113.5 310.5 113.5 311.5 114.5 332.5 114.5 333.5 113.5 346.5 113.5 347.5 112.5 369.5 111.5 370.5 110.5 375.5 110.5 376.5 109.5 381.5 109.5 382.5 108.5 387.5 108.5 388.5 107.5 393.5 107.5 394.5 106.5 404.5 105.5 405.5 104.5 408.5 104.5 409.5 103.5 412.5 103.5 413.5 102.5 416.5 102.5 417.5 101.5 420.5 101.5 421.5 100.5 424.5 100.5 425.5 99.5 440.5 96.5 460.5 86.5 465.5 81.5 466.5 81.5 472.5 75.5 474.5 71.5 474.5 69.5 477.5 64.5 477.5 61.5 470.5 47.5 459.5 38.5 448.5 32.5 446.5 32.5 441.5 29.5 439.5 29.5 432.5 25.5 429.5 25.5 428.5 24.5 425.5 24.5 424.5 23.5 421.5 23.5 420.5 22.5 417.5 22.5 416.5 21.5 413.5 21.5 412.5 20.5 409.5 20.5 404.5 18.5 392.5 17.5 391.5 16.5 385.5 16.5 384.5 15.5 378.5 15.5 377.5 14.5 371.5 14.5 370.5 13.5 365.5 13.5 361.5 28.5 351.5 46.5 343.5 54.5 333.5 59.5 322.5 59.5 313.5 55.5 311.5 53.5 305.5 50.5 297.5 41.5 294.5 33.5 293.5 23.5 286.5 14.5 285.5 11.5 253.5 15.5 252.5 16.5 249.5 16.5 248.5 17.5 245.5 17.5 244.5 18.5 241.5 18.5 240.5 19.5 237.5 19.5 236.5 20.5 221.5 23.5 211.5 27.5 208.5 27.5 207.5 28.5 199.5 30.5 180.5 42.5 175.5 48.5 176.5 49.5 176.5 51.5Z" fill="#0055bb" stroke="#0055bb" stroke-width="1" fill-rule="evenodd"/><path d="M178.5 44.5 180.5 49.5 180.5 81.5 183.5 84.5 192.5 88.5 194.5 90.5 204.5 95.5 215.5 98.5 218.5 100.5 220.5 100.5 227.5 103.5 236.5 104.5 237.5 105.5 242.5 105.5 243.5 106.5 247.5 106.5 248.5 107.5 253.5 107.5 254.5 108.5 259.5 108.5 260.5 109.5 275.5 110.5 276.5 111.5 283.5 111.5 284.5 112.5 292.5 112.5 293.5 113.5 332.5 114.5 333.5 113.5 346.5 113.5 347.5 112.5 369.5 111.5 370.5 110.5 375.5 110.5 376.5 109.5 381.5 109.5 382.5 108.5 387.5 108.5 388.5 107.5 393.5 107.5 394.5 106.5 404.5 105.5 405.5 104.5 408.5 104.5 409.5 103.5 412.5 103.5 413.5 102.5 416.5 102.5 417.5 101.5 420.5 101.5 421.5 100.5 424.5 100.5 425.5 99.5 440.5 96.5 460.5 86.5 465.5 81.5 466.5 81.5 472.5 75.5 474.5 71.5 474.5 69.5 477.5 64.5 477.5 61.5 470.5 47.5 456.5 36.5 448.5 32.5 446.5 32.5 441.5 29.5 439.5 29.5 432.5 25.5 429.5 25.5 428.5 24.5 425.5 24.5 424.5 23.5 421.5 23.5 420.5 22.5 417.5 22.5 416.5 21.5 413.5 21.5 412.5 20.5 409.5 20.5 404.5 18.5 392.5 17.5 391.5 16.5 385.5 16.5 384.5 15.5 380.5 15.5 379.5 17.5 379.5 22.5 377.5 27.5 377.5 33.5 376.5 34.5 375.5 43.5 374.5 44.5 374.5 47.5 372.5 51.5 371.5 57.5 368.5 63.5 360.5 71.5 354.5 74.5 352.5 76.5 339.5 81.5 336.5 81.5 335.5 82.5 322.5 83.5 321.5 82.5 311.5 81.5 310.5 80.5 307.5 80.5 306.5 79.5 298.5 77.5 295.5 75.5 293.5 75.5 286.5 70.5 282.5 63.5 282.5 61.5 280.5 58.5 280.5 56.5 278.5 52.5 278.5 49.5 276.5 44.5 276.5 38.5 275.5 37.5 275.5 30.5 274.5 29.5 274.5 26.5 269.5 13.5 253.5 15.5 252.5 16.5 249.5 16.5 248.5 17.5 245.5 17.5 244.5 18.5 241.5 18.5 240.5 19.5 237.5 19.5 236.5 20.5 221.5 23.5 211.5 27.5 208.5 27.5 207.5 28.5 199.5 30.5Z" fill="#00aadd" stroke="#00aadd" stroke-width="1" fill-rule="evenodd"/><path d="M186.5 38.5 186.5 58.5 185.5 59.5 186.5 65.5 185.5 66.5 185.5 70.5 186.5 71.5 186.5 85.5 204.5 95.5 215.5 98.5 218.5 100.5 220.5 100.5 227.5 103.5 236.5 104.5 237.5 105.5 242.5 105.5 243.5 106.5 247.5 106.5 248.5 107.5 253.5 107.5 254.5 108.5 259.5 108.5 260.5 109.5 275.5 110.5 276.5 111.5 283.5 111.5 284.5 112.5 292.5 112.5 293.5 113.5 332.5 114.5 333.5 113.5 346.5 113.5 347.5 112.5 369.5 111.5 370.5 110.5 375.5 110.5 376.5 109.5 381.5 109.5 382.5 108.5 387.5 108.5 388.5 107.5 393.5 107.5 394.5 106.5 404.5 105.5 405.5 104.5 408.5 104.5 409.5 103.5 412.5 103.5 413.5 102.5 416.5 102.5 417.5 101.5 420.5 101.5 421.5 100.5 424.5 100.5 425.5 99.5 440.5 96.5 460.5 86.5 465.5 81.5 466.5 81.5 472.5 75.5 474.5 71.5 474.5 69.5 477.5 64.5 477.5 61.5 470.5 47.5 456.5 36.5 448.5 32.5 446.5 32.5 441.5 29.5 439.5 29.5 432.5 25.5 429.5 25.5 428.5 24.5 425.5 24.5 424.5 23.5 421.5 23.5 420.5 22.5 417.5 22.5 416.5 21.5 413.5 21.5 412.5 20.5 409.5 20.5 404.5 18.5 394.5 17.5 393.5 36.5 392.5 37.5 392.5 42.5 391.5 43.5 391.5 47.5 390.5 48.5 389.5 55.5 384.5 65.5 384.5 67.5 378.5 77.5 369.5 86.5 358.5 93.5 356.5 93.5 349.5 96.5 346.5 96.5 345.5 97.5 341.5 97.5 340.5 98.5 332.5 99.5 331.5 100.5 314.5 101.5 313.5 100.5 306.5 100.5 305.5 99.5 302.5 99.5 287.5 93.5 272.5 79.5 265.5 66.5 265.5 64.5 263.5 61.5 263.5 59.5 261.5 55.5 260.5 45.5 259.5 44.5 259.5 37.5 258.5 36.5 258.5 30.5 257.5 29.5 256.5 15.5 253.5 15.5 252.5 16.5 249.5 16.5 248.5 17.5 245.5 17.5 244.5 18.5 241.5 18.5 240.5 19.5 237.5 19.5 236.5 20.5 221.5 23.5 211.5 27.5 208.5 27.5 207.5 28.5 199.5 30.5Z" fill="#00ffff" stroke="#00ffff" stroke-width="1" fill-rule="evenodd"/><path d="M470.5 47.5 459.5 38.5 448.5 32.5 446.5 32.5 441.5 29.5 439.5 29.5 432.5 25.5 429.5 25.5 428.5 24.5 425.5 24.5 424.5 23.5 421.5 23.5 420.5 22.5 417.5 22.5 416.5 21.5 406.5 19.5 406.5 22.5 405.5 23.5 405.5 38.5 404.5 39.5 404.5 46.5 403.5 47.5 403.5 55.5 402.5 56.5 401.5 66.5 400.5 67.5 400.5 72.5 399.5 73.5 399.5 76.5 398.5 77.5 397.5 82.5 393.5 90.5 388.5 97.5 379.5 106.5 375.5 109.5 372.5 110.5 381.5 109.5 382.5 108.5 387.5 108.5 388.5 107.5 393.5 107.5 394.5 106.5 399.5 106.5 400.5 105.5 404.5 105.5 405.5 104.5 408.5 104.5 409.5 103.5 412.5 103.5 413.5 102.5 416.5 102.5 417.5 101.5 420.5 101.5 421.5 100.5 424.5 100.5 425.5 99.5 440.5 96.5 460.5 86.5 472.5 75.5 474.5 71.5 474.5 69.5 477.5 64.5 477.5 61.5ZM194.5 33.5 194.5 55.5 193.5 56.5 193.5 62.5 192.5 63.5 192.5 67.5 193.5 68.5 193.5 71.5 192.5 72.5 192.5 82.5 193.5 83.5 194.5 90.5 204.5 95.5 206.5 95.5 207.5 96.5 215.5 98.5 218.5 100.5 220.5 100.5 227.5 103.5 230.5 103.5 231.5 104.5 242.5 105.5 243.5 106.5 253.5 107.5 254.5 108.5 259.5 108.5 260.5 109.5 266.5 109.5 267.5 110.5 275.5 110.5 276.5 111.5 279.5 111.5 272.5 109.5 261.5 103.5 255.5 94.5 250.5 76.5 246.5 68.5 245.5 60.5 244.5 59.5 243.5 51.5 242.5 50.5 242.5 46.5 238.5 39.5 238.5 32.5 241.5 29.5 243.5 25.5 244.5 18.5 241.5 18.5 240.5 19.5 237.5 19.5 236.5 20.5 221.5 23.5 211.5 27.5 208.5 27.5 207.5 28.5 199.5 30.5Z" fill="#00ffaa" stroke="#00ffaa" stroke-width="1" fill-rule="evenodd"/><path d="M220.5 56.5 217.5 61.5 216.5 67.5 214.5 69.5 210.5 78.5 205.5 83.5 205.5 85.5 204.5 86.5 205.5 87.5 206.5 92.5 210.5 97.5 215.5 98.5 218.5 100.5 220.5 100.5 227.5 103.5 231.5 103.5 233.5 98.5 233.5 89.5 228.5 81.5 228.5 79.5 225.5 72.5 225.5 66.5 226.5 65.5 225.5 59.5 223.5 56.5ZM470.5 47.5 459.5 38.5 448.5 32.5 446.5 32.5 441.5 29.5 439.5 29.5 432.5 25.5 429.5 25.5 428.5 24.5 425.5 24.5 424.5 23.5 421.5 23.5 420.5 22.5 415.5 21.5 415.5 23.5 416.5 24.5 416.5 36.5 415.5 37.5 415.5 48.5 416.5 49.5 416.5 52.5 415.5 53.5 415.5 58.5 413.5 63.5 413.5 74.5 412.5 75.5 411.5 87.5 410.5 88.5 410.5 91.5 408.5 96.5 408.5 101.5 407.5 102.5 407.5 104.5 412.5 103.5 413.5 102.5 416.5 102.5 417.5 101.5 420.5 101.5 421.5 100.5 424.5 100.5 425.5 99.5 428.5 99.5 429.5 98.5 432.5 98.5 433.5 97.5 436.5 97.5 437.5 96.5 440.5 96.5 460.5 86.5 465.5 81.5 466.5 81.5 472.5 75.5 474.5 71.5 474.5 69.5 477.5 64.5 477.5 61.5ZM232.5 21.5 221.5 23.5 211.5 27.5 205.5 28.5 207.5 29.5 211.5 29.5 222.5 25.5 228.5 25.5 230.5 24.5Z" fill="#00ff55" stroke="#00ff55" stroke-width="1" fill-rule="evenodd"/><path d="M432.5 25.5 431.5 25.5 431.5 27.5 427.5 35.5 428.5 53.5 427.5 54.5 427.5 61.5 426.5 62.5 427.5 72.5 426.5 73.5 426.5 78.5 425.5 79.5 425.5 95.5 424.5 96.5 424.5 100.5 425.5 99.5 440.5 96.5 460.5 86.5 472.5 75.5 474.5 71.5 474.5 69.5 477.5 64.5 477.5 61.5 470.5 47.5 456.5 36.5 448.5 32.5 446.5 32.5 441.5 29.5 439.5 29.5Z" fill="#00ff00" stroke="#00ff00" stroke-width="1" fill-rule="evenodd"/><path d="M435.5 27.5 435.5 30.5 434.5 31.5 434.5 69.5 433.5 70.5 433.5 90.5 434.5 91.5 434.5 97.5 440.5 96.5 460.5 86.5 472.5 75.5 474.5 71.5 474.5 69.5 477.5 64.5 477.5 61.5 470.5 47.5 456.5 36.5Z" fill="#55ff00" stroke="#55ff00" stroke-width="1" fill-rule="evenodd"/><path d="M443.5 30.5 443.5 36.5 442.5 37.5 443.5 81.5 444.5 82.5 444.5 85.5 446.5 87.5 448.5 92.5 460.5 86.5 472.5 75.5 474.5 71.5 474.5 69.5 477.5 64.5 477.5 61.5 470.5 47.5 456.5 36.5Z" fill="#aaff00" stroke="#aaff00" stroke-width="1" fill-rule="evenodd"/><path d="M450.5 34.5 450.5 57.5 451.5 58.5 452.5 72.5 453.5 73.5 453.5 76.5 459.5 84.5 459.5 86.5 460.5 86.5 472.5 75.5 474.5 71.5 474.5 69.5 477.5 64.5 477.5 61.5 470.5 47.5 456.5 36.5 452.5 34.5Z" fill="#ffff00" stroke="#ffff00" stroke-width="1" fill-rule="evenodd"/><path d="M457.5 37.5 457.5 54.5 458.5 55.5 459.5 66.5 460.5 67.5 460.5 70.5 463.5 76.5 463.5 78.5 464.5 80.5 466.5 81.5 472.5 75.5 474.5 71.5 474.5 69.5 477.5 64.5 477.5 61.5 470.5 47.5Z" fill="#ffaa00" stroke="#ffaa00" stroke-width="1" fill-rule="evenodd"/><path d="M463.5 41.5 464.5 61.5 465.5 62.5 466.5 71.5 469.5 78.5 472.5 75.5 474.5 71.5 474.5 69.5 477.5 64.5 477.5 61.5 470.5 47.5Z" fill="#ff5500" stroke="#ff5500" stroke-width="1" fill-rule="evenodd"/><path d="M469.5 46.5 469.5 53.5 470.5 54.5 470.5 68.5 471.5 69.5 471.5 73.5 472.5 75.5 474.5 71.5 474.5 69.5 477.5 64.5 477.5 61.5Z" fill="#ff0000" stroke="#ff0000" stroke-width="1" fill-rule="evenodd"/></g><clipPath id="cyo"><path d="M171.4 56.3 L173.7 69.7 L182.6 81.6 L202.7 92.7 L229.4 101.7 L262.9 108.3 L297.8 112.1 L324.0 112.8 L365.6 109.8 L400.6 104.3 L437.8 95.3 L459.3 84.6 L471.2 74.1 L475.7 62.2 L475.4 205.8 L471.2 217.7 L459.3 228.1 L437.8 240.0 L400.6 249.0 L365.6 254.2 L324.0 256.7 L297.8 256.1 L262.9 252.7 L229.4 245.7 L202.7 237.1 L181.8 225.2 L172.2 213.3Z"/></clipPath><g clip-path="url(#cyo)" shape-rendering="crispEdges"><path d="M171.4 56.3 L173.7 69.7 L182.6 81.6 L202.7 92.7 L229.4 101.7 L262.9 108.3 L297.8 112.1 L324.0 112.8 L365.6 109.8 L400.6 104.3 L437.8 95.3 L459.3 84.6 L471.2 74.1 L475.7 62.2 L475.4 205.8 L471.2 217.7 L459.3 228.1 L437.8 240.0 L400.6 249.0 L365.6 254.2 L324.0 256.7 L297.8 256.1 L262.9 252.7 L229.4 245.7 L202.7 237.1 L181.8 225.2 L172.2 213.3Z" fill="#0000a0"/><path d="M477.5 61.5 475.5 61.5 470.5 73.5 464.5 79.5 463.5 79.5 458.5 84.5 438.5 94.5 435.5 94.5 434.5 95.5 431.5 95.5 430.5 96.5 427.5 96.5 426.5 97.5 423.5 97.5 422.5 98.5 419.5 98.5 418.5 99.5 415.5 99.5 414.5 100.5 411.5 100.5 410.5 101.5 407.5 101.5 402.5 103.5 398.5 103.5 397.5 104.5 392.5 104.5 391.5 105.5 386.5 105.5 385.5 106.5 380.5 106.5 379.5 107.5 374.5 107.5 373.5 108.5 368.5 108.5 367.5 109.5 345.5 110.5 344.5 111.5 331.5 111.5 330.5 112.5 295.5 111.5 294.5 110.5 286.5 110.5 285.5 109.5 278.5 109.5 277.5 108.5 262.5 107.5 261.5 106.5 256.5 106.5 255.5 105.5 250.5 105.5 249.5 104.5 245.5 104.5 244.5 103.5 239.5 103.5 238.5 102.5 229.5 101.5 228.5 100.5 220.5 98.5 217.5 96.5 206.5 93.5 196.5 88.5 194.5 86.5 185.5 82.5 176.5 70.5 175.5 70.5 175.5 74.5 174.5 75.5 174.5 82.5 175.5 83.5 175.5 90.5 176.5 91.5 176.5 95.5 175.5 96.5 175.5 114.5 174.5 115.5 173.5 131.5 170.5 135.5 171.5 136.5 171.5 214.5 182.5 227.5 187.5 229.5 189.5 231.5 204.5 239.5 215.5 242.5 218.5 244.5 220.5 244.5 227.5 247.5 235.5 248.5 236.5 249.5 240.5 249.5 241.5 250.5 245.5 250.5 246.5 251.5 254.5 252.5 255.5 253.5 259.5 253.5 260.5 254.5 267.5 254.5 268.5 255.5 279.5 255.5 280.5 256.5 291.5 256.5 292.5 257.5 294.5 256.5 307.5 256.5 308.5 257.5 317.5 257.5 318.5 256.5 326.5 256.5 327.5 257.5 334.5 257.5 335.5 256.5 360.5 256.5 361.5 255.5 370.5 255.5 371.5 254.5 377.5 254.5 378.5 253.5 384.5 253.5 385.5 252.5 391.5 252.5 392.5 251.5 404.5 250.5 405.5 249.5 408.5 249.5 409.5 248.5 412.5 248.5 413.5 247.5 416.5 247.5 417.5 246.5 420.5 246.5 421.5 245.5 424.5 245.5 425.5 244.5 428.5 244.5 429.5 243.5 439.5 241.5 445.5 238.5 447.5 236.5 452.5 234.5 454.5 232.5 459.5 230.5 468.5 222.5 469.5 222.5 472.5 219.5 476.5 208.5Z" fill="#0055bb" stroke="#0055bb" stroke-width="1" fill-rule="evenodd"/><path d="M477.5 61.5 475.5 61.5 470.5 73.5 464.5 79.5 463.5 79.5 458.5 84.5 438.5 94.5 435.5 94.5 434.5 95.5 431.5 95.5 430.5 96.5 427.5 96.5 426.5 97.5 423.5 97.5 422.5 98.5 419.5 98.5 418.5 99.5 415.5 99.5 414.5 100.5 411.5 100.5 410.5 101.5 407.5 101.5 402.5 103.5 398.5 103.5 397.5 104.5 392.5 104.5 391.5 105.5 386.5 105.5 385.5 106.5 380.5 106.5 379.5 107.5 374.5 107.5 373.5 108.5 368.5 108.5 367.5 109.5 345.5 110.5 344.5 111.5 331.5 111.5 330.5 112.5 295.5 111.5 294.5 110.5 286.5 110.5 285.5 109.5 278.5 109.5 277.5 108.5 262.5 107.5 261.5 106.5 256.5 106.5 255.5 105.5 250.5 105.5 249.5 104.5 245.5 104.5 244.5 103.5 239.5 103.5 238.5 102.5 229.5 101.5 228.5 100.5 220.5 98.5 217.5 96.5 206.5 93.5 196.5 88.5 194.5 86.5 185.5 82.5 179.5 74.5 179.5 85.5 180.5 86.5 180.5 91.5 181.5 92.5 180.5 120.5 176.5 128.5 176.5 134.5 171.5 144.5 171.5 214.5 182.5 227.5 187.5 229.5 189.5 231.5 204.5 239.5 215.5 242.5 218.5 244.5 220.5 244.5 227.5 247.5 235.5 248.5 236.5 249.5 240.5 249.5 241.5 250.5 245.5 250.5 246.5 251.5 254.5 252.5 255.5 253.5 259.5 253.5 260.5 254.5 267.5 254.5 268.5 255.5 288.5 255.5 289.5 254.5 336.5 254.5 337.5 253.5 346.5 253.5 347.5 254.5 354.5 254.5 355.5 255.5 359.5 255.5 360.5 256.5 361.5 255.5 370.5 255.5 371.5 254.5 377.5 254.5 378.5 253.5 384.5 253.5 385.5 252.5 391.5 252.5 392.5 251.5 404.5 250.5 405.5 249.5 408.5 249.5 409.5 248.5 412.5 248.5 413.5 247.5 416.5 247.5 417.5 246.5 420.5 246.5 421.5 245.5 424.5 245.5 425.5 244.5 428.5 244.5 429.5 243.5 439.5 241.5 445.5 238.5 447.5 236.5 452.5 234.5 454.5 232.5 459.5 230.5 468.5 222.5 469.5 222.5 472.5 219.5 476.5 208.5Z" fill="#00aadd" stroke="#00aadd" stroke-width="1" fill-rule="evenodd"/><path d="M477.5 61.5 475.5 61.5 470.5 73.5 464.5 79.5 463.5 79.5 458.5 84.5 438.5 94.5 435.5 94.5 434.5 95.5 431.5 95.5 430.5 96.5 427.5 96.5 426.5 97.5 423.5 97.5 422.5 98.5 419.5 98.5 418.5 99.5 415.5 99.5 414.5 100.5 411.5 100.5 410.5 101.5 407.5 101.5 402.5 103.5 398.5 103.5 397.5 104.5 392.5 104.5 391.5 105.5 386.5 105.5 385.5 106.5 380.5 106.5 379.5 107.5 374.5 107.5 373.5 108.5 368.5 108.5 367.5 109.5 345.5 110.5 344.5 111.5 331.5 111.5 330.5 112.5 295.5 111.5 294.5 110.5 286.5 110.5 285.5 109.5 278.5 109.5 277.5 108.5 269.5 108.5 268.5 107.5 262.5 107.5 261.5 106.5 250.5 105.5 249.5 104.5 245.5 104.5 244.5 103.5 233.5 102.5 232.5 101.5 229.5 101.5 228.5 100.5 220.5 98.5 217.5 96.5 206.5 93.5 184.5 81.5 185.5 87.5 189.5 95.5 188.5 117.5 187.5 118.5 187.5 122.5 182.5 132.5 179.5 153.5 177.5 156.5 177.5 158.5 174.5 162.5 171.5 164.5 171.5 214.5 182.5 227.5 187.5 229.5 189.5 231.5 204.5 239.5 215.5 242.5 218.5 244.5 220.5 244.5 227.5 247.5 235.5 248.5 236.5 249.5 240.5 249.5 241.5 250.5 245.5 250.5 250.5 252.5 258.5 252.5 259.5 251.5 268.5 251.5 269.5 252.5 291.5 252.5 292.5 251.5 295.5 251.5 296.5 252.5 298.5 252.5 299.5 251.5 341.5 251.5 343.5 250.5 344.5 251.5 361.5 252.5 366.5 255.5 370.5 255.5 371.5 254.5 377.5 254.5 378.5 253.5 384.5 253.5 385.5 252.5 391.5 252.5 392.5 251.5 404.5 250.5 405.5 249.5 408.5 249.5 409.5 248.5 412.5 248.5 413.5 247.5 416.5 247.5 417.5 246.5 420.5 246.5 421.5 245.5 424.5 245.5 425.5 244.5 428.5 244.5 429.5 243.5 439.5 241.5 445.5 238.5 447.5 236.5 452.5 234.5 454.5 232.5 459.5 230.5 468.5 222.5 469.5 222.5 472.5 219.5 476.5 208.5Z" fill="#00ffff" stroke="#00ffff" stroke-width="1" fill-rule="evenodd"/><path d="M477.5 61.5 475.5 61.5 470.5 73.5 464.5 79.5 463.5 79.5 458.5 84.5 438.5 94.5 435.5 94.5 434.5 95.5 431.5 95.5 430.5 96.5 427.5 96.5 426.5 97.5 423.5 97.5 422.5 98.5 419.5 98.5 418.5 99.5 415.5 99.5 414.5 100.5 411.5 100.5 410.5 101.5 407.5 101.5 402.5 103.5 392.5 104.5 391.5 105.5 386.5 105.5 385.5 106.5 380.5 106.5 379.5 107.5 374.5 107.5 373.5 108.5 368.5 108.5 367.5 109.5 359.5 109.5 358.5 110.5 345.5 110.5 344.5 111.5 331.5 111.5 330.5 112.5 313.5 112.5 312.5 111.5 295.5 111.5 294.5 110.5 286.5 110.5 285.5 109.5 278.5 109.5 277.5 108.5 262.5 107.5 261.5 106.5 256.5 106.5 255.5 105.5 250.5 105.5 249.5 104.5 245.5 104.5 244.5 103.5 239.5 103.5 238.5 102.5 229.5 101.5 228.5 100.5 220.5 98.5 217.5 96.5 206.5 93.5 191.5 85.5 194.5 92.5 197.5 96.5 197.5 103.5 196.5 104.5 196.5 118.5 195.5 119.5 194.5 130.5 192.5 135.5 192.5 156.5 191.5 157.5 190.5 162.5 186.5 169.5 181.5 174.5 180.5 174.5 179.5 177.5 174.5 183.5 171.5 183.5 171.5 214.5 182.5 227.5 187.5 229.5 196.5 235.5 204.5 239.5 215.5 242.5 218.5 244.5 220.5 244.5 227.5 247.5 230.5 247.5 231.5 248.5 240.5 249.5 241.5 250.5 247.5 249.5 248.5 248.5 255.5 248.5 256.5 247.5 264.5 247.5 265.5 248.5 273.5 248.5 274.5 249.5 295.5 249.5 296.5 248.5 300.5 248.5 301.5 249.5 320.5 249.5 321.5 248.5 333.5 249.5 334.5 248.5 340.5 247.5 341.5 248.5 361.5 249.5 362.5 250.5 367.5 251.5 372.5 254.5 377.5 254.5 378.5 253.5 384.5 253.5 385.5 252.5 391.5 252.5 392.5 251.5 404.5 250.5 405.5 249.5 408.5 249.5 409.5 248.5 412.5 248.5 413.5 247.5 416.5 247.5 417.5 246.5 420.5 246.5 421.5 245.5 424.5 245.5 425.5 244.5 428.5 244.5 429.5 243.5 439.5 241.5 445.5 238.5 447.5 236.5 452.5 234.5 454.5 232.5 459.5 230.5 468.5 222.5 469.5 222.5 473.5 217.5 472.5 216.5 472.5 211.5 476.5 207.5Z" fill="#00ffaa" stroke="#00ffaa" stroke-width="1" fill-rule="evenodd"/><path d="M477.5 61.5 475.5 61.5 470.5 73.5 464.5 79.5 463.5 79.5 458.5 84.5 438.5 94.5 435.5 94.5 434.5 95.5 431.5 95.5 430.5 96.5 427.5 96.5 426.5 97.5 423.5 97.5 422.5 98.5 419.5 98.5 418.5 99.5 415.5 99.5 414.5 100.5 411.5 100.5 410.5 101.5 407.5 101.5 402.5 103.5 392.5 104.5 391.5 105.5 386.5 105.5 385.5 106.5 380.5 106.5 379.5 107.5 374.5 107.5 373.5 108.5 368.5 108.5 367.5 109.5 359.5 109.5 358.5 110.5 345.5 110.5 344.5 111.5 331.5 111.5 330.5 112.5 313.5 112.5 312.5 111.5 295.5 111.5 294.5 110.5 286.5 110.5 285.5 109.5 278.5 109.5 277.5 108.5 269.5 108.5 268.5 107.5 262.5 107.5 261.5 106.5 256.5 106.5 255.5 105.5 250.5 105.5 249.5 104.5 245.5 104.5 244.5 103.5 239.5 103.5 238.5 102.5 229.5 101.5 228.5 100.5 220.5 98.5 217.5 96.5 206.5 93.5 199.5 89.5 199.5 91.5 204.5 97.5 204.5 104.5 203.5 105.5 203.5 122.5 202.5 123.5 202.5 128.5 201.5 129.5 201.5 158.5 200.5 159.5 199.5 172.5 196.5 179.5 189.5 187.5 189.5 188.5 181.5 196.5 179.5 196.5 178.5 197.5 173.5 197.5 171.5 196.5 171.5 214.5 182.5 227.5 187.5 229.5 189.5 231.5 204.5 239.5 215.5 242.5 218.5 244.5 220.5 244.5 227.5 247.5 231.5 247.5 235.5 244.5 242.5 243.5 243.5 242.5 252.5 242.5 253.5 243.5 259.5 243.5 260.5 244.5 270.5 244.5 271.5 245.5 277.5 245.5 278.5 246.5 323.5 246.5 324.5 247.5 328.5 247.5 329.5 246.5 349.5 245.5 350.5 246.5 356.5 246.5 357.5 247.5 369.5 248.5 370.5 249.5 375.5 250.5 379.5 253.5 384.5 253.5 385.5 252.5 391.5 252.5 392.5 251.5 404.5 250.5 405.5 249.5 408.5 249.5 409.5 248.5 412.5 248.5 413.5 247.5 416.5 247.5 417.5 246.5 420.5 246.5 421.5 245.5 424.5 245.5 425.5 244.5 428.5 244.5 429.5 243.5 439.5 241.5 445.5 238.5 447.5 236.5 452.5 234.5 454.5 232.5 459.5 230.5 471.5 220.5 471.5 218.5 470.5 217.5 470.5 211.5 476.5 203.5Z" fill="#00ff55" stroke="#00ff55" stroke-width="1" fill-rule="evenodd"/><path d="M477.5 61.5 475.5 61.5 470.5 73.5 464.5 79.5 463.5 79.5 458.5 84.5 438.5 94.5 435.5 94.5 434.5 95.5 431.5 95.5 430.5 96.5 427.5 96.5 426.5 97.5 423.5 97.5 422.5 98.5 419.5 98.5 418.5 99.5 415.5 99.5 414.5 100.5 411.5 100.5 410.5 101.5 407.5 101.5 402.5 103.5 392.5 104.5 391.5 105.5 386.5 105.5 385.5 106.5 380.5 106.5 379.5 107.5 374.5 107.5 373.5 108.5 368.5 108.5 367.5 109.5 345.5 110.5 344.5 111.5 331.5 111.5 330.5 112.5 295.5 111.5 294.5 110.5 286.5 110.5 285.5 109.5 278.5 109.5 277.5 108.5 269.5 108.5 268.5 107.5 262.5 107.5 261.5 106.5 250.5 105.5 249.5 104.5 245.5 104.5 244.5 103.5 233.5 102.5 232.5 101.5 229.5 101.5 228.5 100.5 220.5 98.5 217.5 96.5 215.5 96.5 211.5 94.5 212.5 95.5 212.5 109.5 211.5 110.5 211.5 126.5 212.5 127.5 212.5 130.5 211.5 131.5 210.5 145.5 209.5 146.5 209.5 164.5 208.5 165.5 208.5 167.5 206.5 171.5 206.5 175.5 205.5 176.5 205.5 185.5 201.5 192.5 198.5 195.5 187.5 202.5 174.5 201.5 171.5 199.5 171.5 214.5 182.5 227.5 187.5 229.5 189.5 231.5 204.5 239.5 215.5 242.5 218.5 244.5 220.5 243.5 222.5 238.5 226.5 234.5 231.5 232.5 242.5 233.5 243.5 234.5 246.5 234.5 247.5 235.5 250.5 235.5 255.5 237.5 262.5 237.5 263.5 238.5 265.5 238.5 272.5 241.5 275.5 241.5 276.5 242.5 293.5 243.5 294.5 244.5 301.5 244.5 302.5 243.5 316.5 243.5 317.5 244.5 326.5 245.5 327.5 244.5 338.5 244.5 339.5 243.5 345.5 243.5 346.5 242.5 351.5 242.5 352.5 243.5 357.5 243.5 358.5 244.5 373.5 244.5 374.5 245.5 377.5 245.5 382.5 248.5 387.5 249.5 390.5 251.5 404.5 250.5 405.5 249.5 408.5 249.5 409.5 248.5 412.5 248.5 413.5 247.5 416.5 247.5 417.5 246.5 420.5 246.5 421.5 245.5 424.5 245.5 425.5 244.5 428.5 244.5 429.5 243.5 439.5 241.5 445.5 238.5 447.5 236.5 452.5 234.5 454.5 232.5 459.5 230.5 468.5 222.5 469.5 222.5 467.5 212.5 469.5 208.5 474.5 203.5 476.5 199.5Z" fill="#00ff00" stroke="#00ff00" stroke-width="1" fill-rule="evenodd"/><path d="M171.5 202.5 171.5 214.5 178.5 222.5 178.5 223.5 182.5 227.5 187.5 229.5 196.5 235.5 210.5 241.5 209.5 239.5 209.5 234.5 207.5 230.5 205.5 228.5 198.5 225.5 192.5 219.5 192.5 218.5 178.5 205.5 174.5 204.5ZM477.5 61.5 475.5 61.5 470.5 73.5 464.5 79.5 463.5 79.5 458.5 84.5 438.5 94.5 435.5 94.5 434.5 95.5 431.5 95.5 430.5 96.5 427.5 96.5 426.5 97.5 423.5 97.5 422.5 98.5 419.5 98.5 418.5 99.5 415.5 99.5 414.5 100.5 411.5 100.5 410.5 101.5 407.5 101.5 402.5 103.5 392.5 104.5 391.5 105.5 386.5 105.5 385.5 106.5 380.5 106.5 379.5 107.5 374.5 107.5 373.5 108.5 368.5 108.5 367.5 109.5 345.5 110.5 344.5 111.5 331.5 111.5 330.5 112.5 295.5 111.5 294.5 110.5 286.5 110.5 285.5 109.5 269.5 108.5 268.5 107.5 262.5 107.5 261.5 106.5 250.5 105.5 249.5 104.5 245.5 104.5 244.5 103.5 233.5 102.5 232.5 101.5 229.5 101.5 228.5 100.5 220.5 98.5 221.5 99.5 221.5 115.5 220.5 116.5 220.5 127.5 221.5 129.5 220.5 130.5 220.5 142.5 221.5 143.5 221.5 149.5 222.5 150.5 222.5 171.5 223.5 172.5 224.5 177.5 227.5 182.5 227.5 185.5 228.5 186.5 228.5 189.5 229.5 190.5 229.5 193.5 230.5 194.5 231.5 199.5 237.5 210.5 245.5 219.5 245.5 220.5 254.5 228.5 261.5 231.5 265.5 231.5 280.5 238.5 288.5 238.5 289.5 239.5 316.5 239.5 317.5 240.5 323.5 240.5 324.5 241.5 329.5 241.5 330.5 240.5 335.5 240.5 336.5 241.5 338.5 241.5 339.5 240.5 348.5 239.5 349.5 238.5 369.5 238.5 370.5 237.5 373.5 237.5 374.5 236.5 379.5 235.5 382.5 233.5 388.5 233.5 393.5 237.5 401.5 250.5 404.5 250.5 405.5 249.5 408.5 249.5 409.5 248.5 412.5 248.5 413.5 247.5 416.5 247.5 417.5 246.5 420.5 246.5 421.5 245.5 424.5 245.5 425.5 244.5 428.5 244.5 429.5 243.5 439.5 241.5 445.5 238.5 447.5 236.5 452.5 234.5 454.5 232.5 459.5 230.5 465.5 225.5 464.5 210.5 473.5 202.5 473.5 200.5 476.5 195.5ZM429.5 189.5 434.5 190.5 439.5 195.5 441.5 200.5 441.5 210.5 440.5 212.5 435.5 216.5 426.5 216.5 422.5 214.5 419.5 211.5 417.5 207.5 417.5 202.5 419.5 197.5 426.5 190.5 428.5 190.5Z" fill="#55ff00" stroke="#55ff00" stroke-width="1" fill-rule="evenodd"/><path d="M406.5 240.5 410.5 247.5 412.5 248.5 413.5 247.5 416.5 247.5 417.5 246.5 420.5 246.5 421.5 245.5 424.5 245.5 425.5 244.5 428.5 244.5 429.5 243.5 439.5 241.5 445.5 238.5 447.5 236.5 452.5 234.5 454.5 232.5 459.5 230.5 459.5 228.5 457.5 225.5 453.5 223.5 441.5 223.5 440.5 224.5 438.5 224.5 437.5 223.5 426.5 223.5 425.5 224.5 420.5 224.5 413.5 227.5 409.5 231.5 407.5 234.5ZM171.5 205.5 171.5 214.5 178.5 222.5 178.5 223.5 182.5 227.5 187.5 229.5 189.5 231.5 194.5 233.5 196.5 235.5 202.5 238.5 202.5 236.5 200.5 232.5 194.5 227.5 191.5 226.5 179.5 213.5 178.5 210.5 174.5 206.5ZM477.5 61.5 475.5 61.5 470.5 73.5 464.5 79.5 463.5 79.5 458.5 84.5 438.5 94.5 435.5 94.5 434.5 95.5 431.5 95.5 430.5 96.5 427.5 96.5 426.5 97.5 423.5 97.5 422.5 98.5 419.5 98.5 418.5 99.5 415.5 99.5 414.5 100.5 411.5 100.5 410.5 101.5 407.5 101.5 402.5 103.5 392.5 104.5 391.5 105.5 386.5 105.5 385.5 106.5 380.5 106.5 379.5 107.5 374.5 107.5 373.5 108.5 368.5 108.5 367.5 109.5 345.5 110.5 344.5 111.5 331.5 111.5 330.5 112.5 295.5 111.5 294.5 110.5 286.5 110.5 285.5 109.5 278.5 109.5 277.5 108.5 262.5 107.5 261.5 106.5 256.5 106.5 255.5 105.5 250.5 105.5 249.5 104.5 245.5 104.5 244.5 103.5 239.5 103.5 238.5 102.5 229.5 101.5 230.5 103.5 230.5 125.5 229.5 126.5 229.5 131.5 230.5 132.5 230.5 141.5 231.5 142.5 231.5 146.5 232.5 147.5 233.5 155.5 234.5 156.5 235.5 167.5 236.5 168.5 237.5 173.5 239.5 176.5 242.5 188.5 251.5 204.5 257.5 212.5 268.5 221.5 280.5 227.5 282.5 229.5 287.5 230.5 288.5 231.5 309.5 232.5 310.5 233.5 325.5 233.5 326.5 234.5 338.5 234.5 339.5 233.5 345.5 233.5 346.5 232.5 351.5 232.5 352.5 231.5 362.5 230.5 368.5 227.5 378.5 220.5 382.5 216.5 383.5 216.5 391.5 207.5 405.5 183.5 408.5 173.5 410.5 170.5 410.5 168.5 416.5 155.5 420.5 149.5 424.5 145.5 426.5 138.5 429.5 132.5 435.5 125.5 438.5 125.5 441.5 127.5 445.5 133.5 445.5 148.5 444.5 149.5 444.5 152.5 446.5 157.5 447.5 166.5 450.5 174.5 459.5 185.5 461.5 190.5 461.5 192.5 458.5 197.5 458.5 202.5 460.5 204.5 465.5 204.5 472.5 201.5 473.5 194.5 476.5 190.5Z" fill="#aaff00" stroke="#aaff00" stroke-width="1" fill-rule="evenodd"/><path d="M418.5 244.5 419.5 246.5 420.5 246.5 421.5 245.5 436.5 242.5 445.5 238.5 447.5 236.5 453.5 233.5 445.5 229.5 427.5 228.5 423.5 230.5 419.5 234.5 418.5 236.5ZM171.5 207.5 171.5 214.5 178.5 222.5 178.5 223.5 182.5 227.5 187.5 229.5 189.5 231.5 195.5 234.5 193.5 231.5 188.5 228.5 183.5 223.5 183.5 222.5 176.5 215.5 175.5 210.5ZM241.5 103.5 241.5 130.5 242.5 131.5 242.5 135.5 245.5 143.5 245.5 146.5 247.5 151.5 247.5 155.5 248.5 156.5 248.5 160.5 249.5 161.5 249.5 164.5 250.5 165.5 252.5 173.5 257.5 183.5 259.5 185.5 264.5 194.5 272.5 202.5 286.5 212.5 294.5 216.5 296.5 216.5 303.5 219.5 306.5 219.5 307.5 220.5 331.5 220.5 332.5 219.5 337.5 219.5 357.5 211.5 365.5 203.5 371.5 199.5 376.5 194.5 385.5 182.5 390.5 172.5 390.5 170.5 392.5 167.5 392.5 165.5 394.5 162.5 394.5 160.5 396.5 156.5 397.5 148.5 398.5 147.5 398.5 142.5 399.5 141.5 399.5 134.5 400.5 133.5 400.5 130.5 404.5 122.5 403.5 111.5 402.5 110.5 402.5 103.5 392.5 104.5 391.5 105.5 386.5 105.5 385.5 106.5 380.5 106.5 379.5 107.5 374.5 107.5 373.5 108.5 368.5 108.5 367.5 109.5 345.5 110.5 344.5 111.5 331.5 111.5 330.5 112.5 295.5 111.5 294.5 110.5 286.5 110.5 285.5 109.5 278.5 109.5 277.5 108.5 262.5 107.5 261.5 106.5 256.5 106.5 255.5 105.5 250.5 105.5 249.5 104.5ZM477.5 61.5 475.5 61.5 470.5 73.5 458.5 84.5 450.5 88.5 450.5 101.5 449.5 102.5 449.5 120.5 456.5 136.5 459.5 156.5 463.5 166.5 471.5 178.5 471.5 182.5 472.5 183.5 474.5 183.5 476.5 181.5 476.5 135.5 477.5 134.5Z" fill="#ffff00" stroke="#ffff00" stroke-width="1" fill-rule="evenodd"/><path d="M448.5 236.5 444.5 233.5 442.5 233.5 441.5 232.5 437.5 232.5 436.5 233.5 427.5 233.5 425.5 234.5 423.5 237.5 423.5 245.5 439.5 241.5ZM171.5 209.5 171.5 214.5 182.5 227.5 174.5 218.5 173.5 216.5 173.5 211.5ZM252.5 105.5 252.5 117.5 253.5 118.5 253.5 124.5 254.5 125.5 255.5 132.5 259.5 142.5 260.5 151.5 261.5 152.5 262.5 159.5 264.5 162.5 265.5 167.5 271.5 179.5 276.5 184.5 282.5 187.5 290.5 194.5 296.5 197.5 302.5 198.5 303.5 199.5 309.5 199.5 310.5 200.5 323.5 200.5 324.5 201.5 339.5 201.5 342.5 199.5 344.5 199.5 346.5 197.5 349.5 196.5 351.5 194.5 360.5 189.5 370.5 180.5 377.5 166.5 377.5 164.5 379.5 161.5 379.5 159.5 382.5 152.5 383.5 144.5 384.5 143.5 385.5 130.5 386.5 129.5 387.5 121.5 388.5 120.5 389.5 105.5 380.5 106.5 379.5 107.5 374.5 107.5 373.5 108.5 368.5 108.5 367.5 109.5 345.5 110.5 344.5 111.5 331.5 111.5 330.5 112.5 295.5 111.5 294.5 110.5 286.5 110.5 285.5 109.5 278.5 109.5 277.5 108.5 269.5 108.5 268.5 107.5 262.5 107.5 261.5 106.5ZM477.5 61.5 475.5 61.5 470.5 73.5 460.5 82.5 460.5 84.5 461.5 85.5 461.5 91.5 460.5 92.5 460.5 97.5 459.5 98.5 459.5 103.5 458.5 104.5 458.5 114.5 459.5 115.5 460.5 121.5 462.5 124.5 463.5 130.5 466.5 136.5 466.5 140.5 467.5 141.5 468.5 146.5 471.5 152.5 476.5 157.5 476.5 135.5 477.5 134.5Z" fill="#ffaa00" stroke="#ffaa00" stroke-width="1" fill-rule="evenodd"/><path d="M444.5 238.5 440.5 235.5 429.5 236.5 427.5 238.5 426.5 242.5 427.5 244.5 428.5 244.5 429.5 243.5 439.5 241.5ZM263.5 112.5 267.5 122.5 267.5 125.5 268.5 126.5 268.5 129.5 270.5 134.5 270.5 138.5 271.5 139.5 271.5 143.5 272.5 144.5 272.5 148.5 275.5 154.5 285.5 165.5 285.5 166.5 297.5 178.5 302.5 179.5 303.5 180.5 319.5 181.5 320.5 182.5 325.5 182.5 326.5 183.5 337.5 183.5 342.5 180.5 356.5 166.5 364.5 154.5 368.5 145.5 368.5 137.5 369.5 136.5 369.5 121.5 370.5 120.5 370.5 116.5 374.5 111.5 375.5 107.5 373.5 108.5 368.5 108.5 367.5 109.5 345.5 110.5 344.5 111.5 331.5 111.5 330.5 112.5 295.5 111.5 294.5 110.5 286.5 110.5 285.5 109.5 278.5 109.5 277.5 108.5 263.5 107.5ZM477.5 61.5 475.5 61.5 470.5 73.5 466.5 77.5 467.5 82.5 468.5 83.5 468.5 91.5 467.5 92.5 467.5 96.5 466.5 97.5 466.5 101.5 465.5 102.5 465.5 116.5 466.5 117.5 466.5 120.5 469.5 127.5 471.5 129.5 473.5 134.5 476.5 138.5 476.5 135.5 477.5 134.5Z" fill="#ff5500" stroke="#ff5500" stroke-width="1" fill-rule="evenodd"/><path d="M431.5 243.5 439.5 241.5 436.5 239.5 432.5 239.5 431.5 240.5ZM280.5 110.5 286.5 118.5 286.5 120.5 288.5 123.5 291.5 138.5 297.5 153.5 302.5 155.5 310.5 155.5 311.5 156.5 315.5 156.5 316.5 157.5 320.5 157.5 321.5 158.5 335.5 159.5 337.5 158.5 342.5 152.5 343.5 148.5 347.5 141.5 347.5 137.5 348.5 136.5 348.5 124.5 351.5 118.5 356.5 113.5 357.5 113.5 359.5 109.5 358.5 110.5 345.5 110.5 344.5 111.5 331.5 111.5 330.5 112.5 295.5 111.5 294.5 110.5 286.5 110.5 285.5 109.5 280.5 109.5ZM475.5 61.5 471.5 70.5 474.5 78.5 474.5 93.5 473.5 94.5 472.5 102.5 471.5 103.5 471.5 119.5 472.5 120.5 473.5 125.5 477.5 131.5 477.5 61.5Z" fill="#ff0000" stroke="#ff0000" stroke-width="1" fill-rule="evenodd"/></g><g fill="none" stroke="#808080" stroke-width="1" stroke-linejoin="bevel" shape-rendering="crispEdges"><path d="M256.0 30.4 L258.0 30.1 L260.0 29.8 L262.0 29.6 L264.0 29.3 L266.0 29.0 L268.0 28.8 L270.0 28.5 L272.0 28.2 L274.0 28.0 L276.0 27.7 L278.0 27.4 L280.0 27.1 L282.0 26.9 L284.0 26.6 L286.0 26.4 L288.0 26.4 L290.0 26.3 L292.0 26.3 L294.0 26.2 L296.0 26.1 L298.0 26.1 L300.0 26.0 L302.0 26.0 L304.0 25.9 L306.0 25.9 L308.0 25.8 L310.0 25.7 L312.0 25.7 L314.0 25.6 L316.0 25.6 L318.0 25.5 L320.0 25.5 L322.0 25.4 L324.0 25.4 L326.0 25.5 L328.0 25.6 L330.0 25.7 L332.0 25.9 L334.0 26.0 L336.0 26.1 L338.0 26.2 L340.0 26.4 L342.0 26.5 L344.0 26.6 L346.0 26.7 L348.0 26.9 L350.0 27.0 L352.0 27.1 L354.0 27.2 L356.0 27.4 L358.0 27.5 L360.0 27.6 L362.0 27.7 L364.0 27.9 L366.0 28.0 L368.0 28.3 L370.0 28.6 L372.0 28.9 L374.0 29.2 L376.0 29.5 L378.0 29.8 L380.0 30.0 L382.0 30.3 L384.0 30.6 L386.0 30.9 L388.0 31.2 L390.0 31.5 L392.0 31.8 L394.0 32.1 L396.0 32.4 L398.0 32.7 L400.0 33.0 L402.0 33.4M256.0 44.7 L258.0 44.5 L260.0 44.2 L262.0 43.9 L264.0 43.6 L266.0 43.4 L268.0 43.1 L270.0 42.8 L272.0 42.6 L274.0 42.3 L276.0 42.0 L278.0 41.8 L280.0 41.5 L282.0 41.2 L284.0 41.0 L286.0 40.8 L288.0 40.7 L290.0 40.7 L292.0 40.6 L294.0 40.6 L296.0 40.5 L298.0 40.4 L300.0 40.4 L302.0 40.3 L304.0 40.3 L306.0 40.2 L308.0 40.2 L310.0 40.1 L312.0 40.0 L314.0 40.0 L316.0 39.9 L318.0 39.9 L320.0 39.8 L322.0 39.8 L324.0 39.7 L326.0 39.8 L328.0 40.0 L330.0 40.1 L332.0 40.2 L334.0 40.3 L336.0 40.5 L338.0 40.6 L340.0 40.7 L342.0 40.8 L344.0 41.0 L346.0 41.1 L348.0 41.2 L350.0 41.3 L352.0 41.5 L354.0 41.6 L356.0 41.7 L358.0 41.8 L360.0 42.0 L362.0 42.1 L364.0 42.2 L366.0 42.4 L368.0 42.6 L370.0 42.9 L372.0 43.2 L374.0 43.5 L376.0 43.8 L378.0 44.1 L380.0 44.4 L382.0 44.7 L384.0 45.0 L386.0 45.3 L388.0 45.6 L390.0 45.9 L392.0 46.1 L394.0 46.4 L396.0 46.7 L398.0 47.0 L400.0 47.3 L402.0 47.7M256.0 59.1 L258.0 58.8 L260.0 58.5 L262.0 58.3 L264.0 58.0 L266.0 57.7 L268.0 57.5 L270.0 57.2 L272.0 56.9 L274.0 56.7 L276.0 56.4 L278.0 56.1 L280.0 55.8 L282.0 55.6 L284.0 55.3 L286.0 55.1 L288.0 55.1 L290.0 55.0 L292.0 55.0 L294.0 54.9 L296.0 54.8 L298.0 54.8 L300.0 54.7 L302.0 54.7 L304.0 54.6 L306.0 54.6 L308.0 54.5 L310.0 54.4 L312.0 54.4 L314.0 54.3 L316.0 54.3 L318.0 54.2 L320.0 54.2 L322.0 54.1 L324.0 54.0 L326.0 54.2 L328.0 54.3 L330.0 54.4 L332.0 54.5 L334.0 54.7 L336.0 54.8 L338.0 54.9 L340.0 55.0 L342.0 55.2 L344.0 55.3 L346.0 55.4 L348.0 55.5 L350.0 55.7 L352.0 55.8 L354.0 55.9 L356.0 56.0 L358.0 56.2 L360.0 56.3 L362.0 56.4 L364.0 56.5 L366.0 56.7 L368.0 57.0 L370.0 57.3 L372.0 57.6 L374.0 57.9 L376.0 58.2 L378.0 58.5 L380.0 58.7 L382.0 59.0 L384.0 59.3 L386.0 59.6 L388.0 59.9 L390.0 60.2 L392.0 60.5 L394.0 60.8 L396.0 61.1 L398.0 61.4 L400.0 61.7 L402.0 62.1M256.0 73.4 L258.0 73.2 L260.0 72.9 L262.0 72.6 L264.0 72.3 L266.0 72.1 L268.0 71.8 L270.0 71.5 L272.0 71.3 L274.0 71.0 L276.0 70.7 L278.0 70.5 L280.0 70.2 L282.0 69.9 L284.0 69.7 L286.0 69.5 L288.0 69.4 L290.0 69.4 L292.0 69.3 L294.0 69.3 L296.0 69.2 L298.0 69.1 L300.0 69.1 L302.0 69.0 L304.0 69.0 L306.0 68.9 L308.0 68.9 L310.0 68.8 L312.0 68.7 L314.0 68.7 L316.0 68.6 L318.0 68.6 L320.0 68.5 L322.0 68.5 L324.0 68.4 L326.0 68.5 L328.0 68.6 L330.0 68.8 L332.0 68.9 L334.0 69.0 L336.0 69.1 L338.0 69.3 L340.0 69.4 L342.0 69.5 L344.0 69.6 L346.0 69.8 L348.0 69.9 L350.0 70.0 L352.0 70.1 L354.0 70.3 L356.0 70.4 L358.0 70.5 L360.0 70.6 L362.0 70.8 L364.0 70.9 L366.0 71.1 L368.0 71.3 L370.0 71.6 L372.0 71.9 L374.0 72.2 L376.0 72.5 L378.0 72.8 L380.0 73.1 L382.0 73.4 L384.0 73.7 L386.0 74.0 L388.0 74.3 L390.0 74.6 L392.0 74.8 L394.0 75.1 L396.0 75.4 L398.0 75.7 L400.0 76.0 L402.0 76.4M256.0 87.8 L258.0 87.5 L260.0 87.2 L262.0 87.0 L264.0 86.7 L266.0 86.4 L268.0 86.2 L270.0 85.9 L272.0 85.6 L274.0 85.4 L276.0 85.1 L278.0 84.8 L280.0 84.5 L282.0 84.3 L284.0 84.0 L286.0 83.8 L288.0 83.8 L290.0 83.7 L292.0 83.7 L294.0 83.6 L296.0 83.5 L298.0 83.5 L300.0 83.4 L302.0 83.4 L304.0 83.3 L306.0 83.3 L308.0 83.2 L310.0 83.1 L312.0 83.1 L314.0 83.0 L316.0 83.0 L318.0 82.9 L320.0 82.9 L322.0 82.8 L324.0 82.8 L326.0 82.9 L328.0 83.0 L330.0 83.1 L332.0 83.2 L334.0 83.4 L336.0 83.5 L338.0 83.6 L340.0 83.8 L342.0 83.9 L344.0 84.0 L346.0 84.1 L348.0 84.2 L350.0 84.4 L352.0 84.5 L354.0 84.6 L356.0 84.8 L358.0 84.9 L360.0 85.0 L362.0 85.1 L364.0 85.2 L366.0 85.4 L368.0 85.7 L370.0 86.0 L372.0 86.3 L374.0 86.6 L376.0 86.9 L378.0 87.2 L380.0 87.4 L382.0 87.7 L384.0 88.0 L386.0 88.3 L388.0 88.6 L390.0 88.9 L392.0 89.2 L394.0 89.5 L396.0 89.8 L398.0 90.1 L400.0 90.4 L402.0 90.8M256.0 102.1 L258.0 101.9 L260.0 101.6 L262.0 101.3 L264.0 101.0 L266.0 100.8 L268.0 100.5 L270.0 100.2 L272.0 100.0 L274.0 99.7 L276.0 99.4 L278.0 99.2 L280.0 98.9 L282.0 98.6 L284.0 98.4 L286.0 98.2 L288.0 98.1 L290.0 98.1 L292.0 98.0 L294.0 98.0 L296.0 97.9 L298.0 97.8 L300.0 97.8 L302.0 97.7 L304.0 97.7 L306.0 97.6 L308.0 97.6 L310.0 97.5 L312.0 97.4 L314.0 97.4 L316.0 97.3 L318.0 97.3 L320.0 97.2 L322.0 97.2 L324.0 97.1 L326.0 97.2 L328.0 97.4 L330.0 97.5 L332.0 97.6 L334.0 97.7 L336.0 97.9 L338.0 98.0 L340.0 98.1 L342.0 98.2 L344.0 98.4 L346.0 98.5 L348.0 98.6 L350.0 98.7 L352.0 98.9 L354.0 99.0 L356.0 99.1 L358.0 99.2 L360.0 99.4 L362.0 99.5 L364.0 99.6 L366.0 99.8 L368.0 100.0 L370.0 100.3 L372.0 100.6 L374.0 100.9 L376.0 101.2 L378.0 101.5 L380.0 101.8 L382.0 102.1 L384.0 102.4 L386.0 102.7 L388.0 103.0 L390.0 103.3 L392.0 103.5 L394.0 103.8M318.0 111.6 L320.0 111.6 L322.0 111.5 L324.0 111.5 L326.0 111.6" stroke-dasharray="5 4.500" clip-path="url(#cyi)"/><path d="M174.0 66.7 L176.0 63.6 L178.0 60.5 L180.0 57.8 L182.0 56.5 L184.0 55.3 L186.0 54.0 L188.0 52.8 L190.0 51.5 L192.0 50.3 L194.0 49.0 L196.0 47.8 L198.0 46.7 L200.0 46.0 L202.0 45.3 L204.0 44.6 L206.0 43.8 L208.0 43.1 L210.0 42.4 L212.0 41.7 L214.0 41.0 L216.0 40.3 L218.0 39.6 L220.0 38.9 L222.0 38.2 L224.0 37.6 L226.0 37.2 L228.0 36.7 L230.0 36.3 L232.0 35.8 L234.0 35.3 L236.0 34.9 L238.0 34.4 L240.0 33.9 L242.0 33.5 L244.0 33.0 L246.0 32.6 L248.0 32.1 L250.0 31.6 L252.0 31.2 L254.0 30.7M404.0 33.9 L406.0 34.3 L408.0 34.8 L410.0 35.3 L412.0 35.8 L414.0 36.3 L416.0 36.7 L418.0 37.2 L420.0 37.7 L422.0 38.2 L424.0 38.6 L426.0 39.1 L428.0 39.6 L430.0 40.1 L432.0 40.9 L434.0 41.8 L436.0 42.7 L438.0 43.7 L440.0 44.6 L442.0 45.5 L444.0 46.4 L446.0 47.3 L448.0 48.2 L450.0 49.1 L452.0 50.0 L454.0 50.9 L456.0 52.2 L458.0 53.8 L460.0 55.4 L462.0 56.9 L464.0 58.5 L466.0 60.1 L468.0 61.7 L470.0 64.6 L472.0 68.8M180.0 72.1 L182.0 70.9 L184.0 69.6 L186.0 68.4 L188.0 67.1 L190.0 65.9 L192.0 64.6 L194.0 63.4 L196.0 62.1 L198.0 61.0 L200.0 60.3 L202.0 59.6 L204.0 58.9 L206.0 58.2 L208.0 57.5 L210.0 56.8 L212.0 56.1 L214.0 55.4 L216.0 54.7 L218.0 54.0 L220.0 53.3 L222.0 52.5 L224.0 52.0 L226.0 51.5 L228.0 51.1 L230.0 50.6 L232.0 50.1 L234.0 49.7 L236.0 49.2 L238.0 48.8 L240.0 48.3 L242.0 47.8 L244.0 47.4 L246.0 46.9 L248.0 46.4 L250.0 46.0 L252.0 45.5 L254.0 45.1M404.0 48.2 L406.0 48.7 L408.0 49.2 L410.0 49.6 L412.0 50.1 L414.0 50.6 L416.0 51.1 L418.0 51.6 L420.0 52.0 L422.0 52.5 L424.0 53.0 L426.0 53.5 L428.0 54.0 L430.0 54.4 L432.0 55.3 L434.0 56.2 L436.0 57.1 L438.0 58.0 L440.0 58.9 L442.0 59.8 L444.0 60.7 L446.0 61.6 L448.0 62.6 L450.0 63.5 L452.0 64.4 L454.0 65.3 L456.0 66.6 L458.0 68.1 L460.0 69.7 L462.0 71.3 L464.0 72.9 L466.0 74.4M188.0 81.5 L190.0 80.2 L192.0 79.0 L194.0 77.7 L196.0 76.5 L198.0 75.4 L200.0 74.7 L202.0 74.0 L204.0 73.3 L206.0 72.5 L208.0 71.8 L210.0 71.1 L212.0 70.4 L214.0 69.7 L216.0 69.0 L218.0 68.3 L220.0 67.6 L222.0 66.9 L224.0 66.3 L226.0 65.9 L228.0 65.4 L230.0 65.0 L232.0 64.5 L234.0 64.0 L236.0 63.6 L238.0 63.1 L240.0 62.6 L242.0 62.2 L244.0 61.7 L246.0 61.3 L248.0 60.8 L250.0 60.3 L252.0 59.9 L254.0 59.4M404.0 62.6 L406.0 63.0 L408.0 63.5 L410.0 64.0 L412.0 64.5 L414.0 65.0 L416.0 65.4 L418.0 65.9 L420.0 66.4 L422.0 66.9 L424.0 67.3 L426.0 67.8 L428.0 68.3 L430.0 68.8 L432.0 69.6 L434.0 70.5 L436.0 71.4 L438.0 72.4 L440.0 73.3 L442.0 74.2 L444.0 75.1 L446.0 76.0 L448.0 76.9 L450.0 77.8 L452.0 78.7 L454.0 79.6 L456.0 80.9 L458.0 82.5M200.0 89.0 L202.0 88.3 L204.0 87.6 L206.0 86.9 L208.0 86.2 L210.0 85.5 L212.0 84.8 L214.0 84.1 L216.0 83.4 L218.0 82.7 L220.0 82.0 L222.0 81.2 L224.0 80.7 L226.0 80.2 L228.0 79.8 L230.0 79.3 L232.0 78.8 L234.0 78.4 L236.0 77.9 L238.0 77.5 L240.0 77.0 L242.0 76.5 L244.0 76.1 L246.0 75.6 L248.0 75.1 L250.0 74.7 L252.0 74.2 L254.0 73.8M404.0 76.9 L406.0 77.4 L408.0 77.9 L410.0 78.3 L412.0 78.8 L414.0 79.3 L416.0 79.8 L418.0 80.3 L420.0 80.7 L422.0 81.2 L424.0 81.7 L426.0 82.2 L428.0 82.7 L430.0 83.1 L432.0 84.0 L434.0 84.9 L436.0 85.8 L438.0 86.7 L440.0 87.6 L442.0 88.5 L444.0 89.4M220.0 96.3 L222.0 95.6 L224.0 95.0 L226.0 94.6 L228.0 94.1 L230.0 93.7 L232.0 93.2 L234.0 92.7 L236.0 92.3 L238.0 91.8 L240.0 91.3 L242.0 90.9 L244.0 90.4 L246.0 90.0 L248.0 89.5 L250.0 89.0 L252.0 88.6 L254.0 88.1M404.0 91.3 L406.0 91.7 L408.0 92.2 L410.0 92.7 L412.0 93.2 L414.0 93.7 L416.0 94.1 L418.0 94.6 L420.0 95.1 L422.0 95.6 L424.0 96.0 L426.0 96.5M248.0 103.8 L250.0 103.4 L252.0 102.9 L254.0 102.5" stroke-dasharray="2 2.500" clip-path="url(#cyi)"/><path d="M264.0 122.9 L266.0 123.1 L268.0 123.3 L270.0 123.5 L272.0 123.7 L274.0 123.9 L276.0 124.2 L278.0 124.4 L280.0 124.6 L282.0 124.8 L284.0 125.0 L286.0 125.2 L288.0 125.4 L290.0 125.7 L292.0 125.9 L294.0 126.1 L296.0 126.3 L298.0 126.5 L300.0 126.6 L302.0 126.6 L304.0 126.7 L306.0 126.7 L308.0 126.8 L310.0 126.8 L312.0 126.9 L314.0 126.9 L316.0 127.0 L318.0 127.0 L320.0 127.1 L322.0 127.1 L324.0 127.2 L326.0 127.0 L328.0 126.9 L330.0 126.8 L332.0 126.6 L334.0 126.5 L336.0 126.3 L338.0 126.2 L340.0 126.1 L342.0 125.9 L344.0 125.8 L346.0 125.6 L348.0 125.5 L350.0 125.3 L352.0 125.2 L354.0 125.1 L356.0 124.9 L358.0 124.8 L360.0 124.6 L362.0 124.5 L364.0 124.4 L366.0 124.2 L368.0 123.9 L370.0 123.6 L372.0 123.2 L374.0 122.9 L376.0 122.6 L378.0 122.3 L380.0 122.0 L382.0 121.7 L384.0 121.4 L386.0 121.1 L388.0 120.7 L390.0 120.4 L392.0 120.1 L394.0 119.8M264.0 137.3 L266.0 137.5 L268.0 137.7 L270.0 137.9 L272.0 138.1 L274.0 138.4 L276.0 138.6 L278.0 138.8 L280.0 139.0 L282.0 139.2 L284.0 139.4 L286.0 139.6 L288.0 139.9 L290.0 140.1 L292.0 140.3 L294.0 140.5 L296.0 140.7 L298.0 140.9 L300.0 141.0 L302.0 141.0 L304.0 141.1 L306.0 141.1 L308.0 141.2 L310.0 141.2 L312.0 141.3 L314.0 141.3 L316.0 141.4 L318.0 141.4 L320.0 141.5 L322.0 141.5 L324.0 141.6 L326.0 141.4 L328.0 141.3 L330.0 141.2 L332.0 141.0 L334.0 140.9 L336.0 140.7 L338.0 140.6 L340.0 140.5 L342.0 140.3 L344.0 140.2 L346.0 140.0 L348.0 139.9 L350.0 139.8 L352.0 139.6 L354.0 139.5 L356.0 139.3 L358.0 139.2 L360.0 139.1 L362.0 138.9 L364.0 138.8 L366.0 138.6 L368.0 138.3 L370.0 138.0 L372.0 137.7 L374.0 137.4 L376.0 137.1 L378.0 136.8 L380.0 136.4 L382.0 136.1 L384.0 135.8 L386.0 135.5 L388.0 135.2 L390.0 134.9 L392.0 134.6 L394.0 134.3M264.0 151.7 L266.0 151.9 L268.0 152.2 L270.0 152.4 L272.0 152.6 L274.0 152.8 L276.0 153.0 L278.0 153.2 L280.0 153.4 L282.0 153.6 L284.0 153.8 L286.0 154.1 L288.0 154.3 L290.0 154.5 L292.0 154.7 L294.0 154.9 L296.0 155.1 L298.0 155.3 L300.0 155.4 L302.0 155.4 L304.0 155.5 L306.0 155.5 L308.0 155.6 L310.0 155.6 L312.0 155.7 L314.0 155.7 L316.0 155.8 L318.0 155.8 L320.0 155.9 L322.0 155.9 L324.0 156.0 L326.0 155.8 L328.0 155.7 L330.0 155.6 L332.0 155.4 L334.0 155.3 L336.0 155.1 L338.0 155.0 L340.0 154.9 L342.0 154.7 L344.0 154.6 L346.0 154.5 L348.0 154.3 L350.0 154.2 L352.0 154.1 L354.0 153.9 L356.0 153.8 L358.0 153.6 L360.0 153.5 L362.0 153.4 L364.0 153.2 L366.0 153.1 L368.0 152.7 L370.0 152.4 L372.0 152.1 L374.0 151.8 L376.0 151.5 L378.0 151.2 L380.0 150.9 L382.0 150.6 L384.0 150.3 L386.0 150.0 L388.0 149.7 L390.0 149.3 L392.0 149.0 L394.0 148.7M264.0 166.2 L266.0 166.4 L268.0 166.6 L270.0 166.8 L272.0 167.0 L274.0 167.2 L276.0 167.4 L278.0 167.6 L280.0 167.8 L282.0 168.1 L284.0 168.3 L286.0 168.5 L288.0 168.7 L290.0 168.9 L292.0 169.1 L294.0 169.3 L296.0 169.5 L298.0 169.7 L300.0 169.8 L302.0 169.8 L304.0 169.9 L306.0 169.9 L308.0 170.0 L310.0 170.0 L312.0 170.1 L314.0 170.1 L316.0 170.2 L318.0 170.2 L320.0 170.3 L322.0 170.3 L324.0 170.4 L326.0 170.2 L328.0 170.1 L330.0 170.0 L332.0 169.8 L334.0 169.7 L336.0 169.6 L338.0 169.4 L340.0 169.3 L342.0 169.1 L344.0 169.0 L346.0 168.9 L348.0 168.7 L350.0 168.6 L352.0 168.5 L354.0 168.3 L356.0 168.2 L358.0 168.1 L360.0 167.9 L362.0 167.8 L364.0 167.7 L366.0 167.5 L368.0 167.2 L370.0 166.9 L372.0 166.6 L374.0 166.3 L376.0 166.0 L378.0 165.7 L380.0 165.3 L382.0 165.0 L384.0 164.7 L386.0 164.4 L388.0 164.1 L390.0 163.8 L392.0 163.5 L394.0 163.2M264.0 180.6 L266.0 180.8 L268.0 181.0 L270.0 181.2 L272.0 181.4 L274.0 181.6 L276.0 181.9 L278.0 182.1 L280.0 182.3 L282.0 182.5 L284.0 182.7 L286.0 182.9 L288.0 183.1 L290.0 183.3 L292.0 183.5 L294.0 183.7 L296.0 183.9 L298.0 184.1 L300.0 184.2 L302.0 184.2 L304.0 184.3 L306.0 184.3 L308.0 184.4 L310.0 184.4 L312.0 184.5 L314.0 184.5 L316.0 184.6 L318.0 184.6 L320.0 184.7 L322.0 184.7 L324.0 184.8 L326.0 184.6 L328.0 184.5 L330.0 184.4 L332.0 184.2 L334.0 184.1 L336.0 184.0 L338.0 183.8 L340.0 183.7 L342.0 183.6 L344.0 183.4 L346.0 183.3 L348.0 183.2 L350.0 183.0 L352.0 182.9 L354.0 182.8 L356.0 182.6 L358.0 182.5 L360.0 182.4 L362.0 182.2 L364.0 182.1 L366.0 181.9 L368.0 181.6 L370.0 181.3 L372.0 181.0 L374.0 180.7 L376.0 180.4 L378.0 180.1 L380.0 179.8 L382.0 179.5 L384.0 179.2 L386.0 178.9 L388.0 178.6 L390.0 178.3 L392.0 178.0 L394.0 177.7M264.0 195.1 L266.0 195.3 L268.0 195.5 L270.0 195.7 L272.0 195.9 L274.0 196.1 L276.0 196.3 L278.0 196.5 L280.0 196.7 L282.0 196.9 L284.0 197.1 L286.0 197.3 L288.0 197.5 L290.0 197.7 L292.0 197.9 L294.0 198.1 L296.0 198.3 L298.0 198.5 L300.0 198.6 L302.0 198.6 L304.0 198.7 L306.0 198.7 L308.0 198.7 L310.0 198.8 L312.0 198.8 L314.0 198.9 L316.0 198.9 L318.0 199.0 L320.0 199.0 L322.0 199.1 L324.0 199.1 L326.0 199.0 L328.0 198.9 L330.0 198.8 L332.0 198.6 L334.0 198.5 L336.0 198.4 L338.0 198.2 L340.0 198.1 L342.0 198.0 L344.0 197.8 L346.0 197.7 L348.0 197.6 L350.0 197.5 L352.0 197.3 L354.0 197.2 L356.0 197.1 L358.0 196.9 L360.0 196.8 L362.0 196.7 L364.0 196.5 L366.0 196.4 L368.0 196.1 L370.0 195.8 L372.0 195.5 L374.0 195.2 L376.0 194.9 L378.0 194.6 L380.0 194.3 L382.0 193.9 L384.0 193.6 L386.0 193.3 L388.0 193.0 L390.0 192.7 L392.0 192.4 L394.0 192.1M264.0 209.5 L266.0 209.7 L268.0 209.9 L270.0 210.1 L272.0 210.3 L274.0 210.5 L276.0 210.7 L278.0 210.9 L280.0 211.1 L282.0 211.3 L284.0 211.5 L286.0 211.7 L288.0 211.9 L290.0 212.1 L292.0 212.3 L294.0 212.5 L296.0 212.7 L298.0 212.9 L300.0 213.0 L302.0 213.0 L304.0 213.0 L306.0 213.1 L308.0 213.1 L310.0 213.2 L312.0 213.2 L314.0 213.3 L316.0 213.3 L318.0 213.4 L320.0 213.4 L322.0 213.5 L324.0 213.5 L326.0 213.4 L328.0 213.3 L330.0 213.1 L332.0 213.0 L334.0 212.9 L336.0 212.8 L338.0 212.6 L340.0 212.5 L342.0 212.4 L344.0 212.3 L346.0 212.1 L348.0 212.0 L350.0 211.9 L352.0 211.7 L354.0 211.6 L356.0 211.5 L358.0 211.4 L360.0 211.2 L362.0 211.1 L364.0 211.0 L366.0 210.8 L368.0 210.5 L370.0 210.2 L372.0 209.9 L374.0 209.6 L376.0 209.3 L378.0 209.0 L380.0 208.7 L382.0 208.4 L384.0 208.1 L386.0 207.8 L388.0 207.5 L390.0 207.2 L392.0 206.9 L394.0 206.6M264.0 223.9 L266.0 224.1 L268.0 224.3 L270.0 224.5 L272.0 224.7 L274.0 224.9 L276.0 225.1 L278.0 225.3 L280.0 225.5 L282.0 225.7 L284.0 225.9 L286.0 226.1 L288.0 226.3 L290.0 226.5 L292.0 226.7 L294.0 226.9 L296.0 227.1 L298.0 227.3 L300.0 227.4 L302.0 227.4 L304.0 227.4 L306.0 227.5 L308.0 227.5 L310.0 227.6 L312.0 227.6 L314.0 227.7 L316.0 227.7 L318.0 227.8 L320.0 227.8 L322.0 227.9 L324.0 227.9 L326.0 227.8 L328.0 227.7 L330.0 227.5 L332.0 227.4 L334.0 227.3 L336.0 227.2 L338.0 227.0 L340.0 226.9 L342.0 226.8 L344.0 226.7 L346.0 226.5 L348.0 226.4 L350.0 226.3 L352.0 226.2 L354.0 226.0 L356.0 225.9 L358.0 225.8 L360.0 225.7 L362.0 225.5 L364.0 225.4 L366.0 225.3 L368.0 225.0 L370.0 224.7 L372.0 224.4 L374.0 224.1 L376.0 223.8 L378.0 223.5 L380.0 223.2 L382.0 222.9 L384.0 222.6 L386.0 222.3 L388.0 222.0 L390.0 221.7 L392.0 221.4 L394.0 221.1M264.0 238.4 L266.0 238.6 L268.0 238.8 L270.0 239.0 L272.0 239.2 L274.0 239.4 L276.0 239.6 L278.0 239.7 L280.0 239.9 L282.0 240.1 L284.0 240.3 L286.0 240.5 L288.0 240.7 L290.0 240.9 L292.0 241.1 L294.0 241.3 L296.0 241.5 L298.0 241.7 L300.0 241.8 L302.0 241.8 L304.0 241.8 L306.0 241.9 L308.0 241.9 L310.0 242.0 L312.0 242.0 L314.0 242.1 L316.0 242.1 L318.0 242.2 L320.0 242.2 L322.0 242.3 L324.0 242.3 L326.0 242.2 L328.0 242.1 L330.0 241.9 L332.0 241.8 L334.0 241.7 L336.0 241.6 L338.0 241.5 L340.0 241.3 L342.0 241.2 L344.0 241.1 L346.0 241.0 L348.0 240.8 L350.0 240.7 L352.0 240.6 L354.0 240.5 L356.0 240.3 L358.0 240.2 L360.0 240.1 L362.0 240.0 L364.0 239.9 L366.0 239.7 L368.0 239.4 L370.0 239.1 L372.0 238.8 L374.0 238.5 L376.0 238.2 L378.0 237.9 L380.0 237.6 L382.0 237.3 L384.0 237.0 L386.0 236.7 L388.0 236.4 L390.0 236.1 L392.0 235.8 L394.0 235.5" stroke-dasharray="5 5.500"/><path d="M172.0 75.1 L174.0 84.6 L176.0 87.3 L178.0 90.0 L180.0 92.6 L182.0 95.2 L184.0 96.8 L186.0 97.9 L188.0 99.0 L190.0 100.1 L192.0 101.2 L194.0 102.3 L196.0 103.4 L198.0 104.5 L200.0 105.6 L202.0 106.8 L204.0 107.6 L206.0 108.2 L208.0 108.9 L210.0 109.6 L212.0 110.3 L214.0 110.9 L216.0 111.6 L218.0 112.3 L220.0 112.9 L222.0 113.6 L224.0 114.3 L226.0 115.0 L228.0 115.6 L230.0 116.2 L232.0 116.6 L234.0 117.0 L236.0 117.4 L238.0 117.8 L240.0 118.2 L242.0 118.6 L244.0 119.0 L246.0 119.4 L248.0 119.8 L250.0 120.2 L252.0 120.6 L254.0 121.0 L256.0 121.4 L258.0 121.8 L260.0 122.2 L262.0 122.6M396.0 119.5 L398.0 119.2 L400.0 118.9 L402.0 118.4 L404.0 117.9 L406.0 117.5 L408.0 117.0 L410.0 116.5 L412.0 116.0 L414.0 115.5 L416.0 115.0 L418.0 114.6 L420.0 114.1 L422.0 113.6 L424.0 113.1 L426.0 112.6 L428.0 112.1 L430.0 111.7 L432.0 111.2 L434.0 110.7 L436.0 110.2 L438.0 109.7 L440.0 108.7 L442.0 107.7 L444.0 106.6 L446.0 105.6 L448.0 104.6 L450.0 103.6 L452.0 102.6 L454.0 101.6 L456.0 100.6 L458.0 99.6 L460.0 98.3 L462.0 96.6 L464.0 94.8 L466.0 93.0 L468.0 91.3 L470.0 89.5 L472.0 86.3 L474.0 81.0M172.0 90.5 L174.0 99.2 L176.0 101.8 L178.0 104.5 L180.0 107.1 L182.0 109.7 L184.0 111.2 L186.0 112.3 L188.0 113.4 L190.0 114.5 L192.0 115.6 L194.0 116.7 L196.0 117.9 L198.0 119.0 L200.0 120.1 L202.0 121.2 L204.0 122.0 L206.0 122.7 L208.0 123.4 L210.0 124.0 L212.0 124.7 L214.0 125.4 L216.0 126.0 L218.0 126.7 L220.0 127.4 L222.0 128.0 L224.0 128.7 L226.0 129.4 L228.0 130.0 L230.0 130.6 L232.0 131.0 L234.0 131.4 L236.0 131.8 L238.0 132.2 L240.0 132.6 L242.0 133.0 L244.0 133.4 L246.0 133.8 L248.0 134.2 L250.0 134.6 L252.0 135.0 L254.0 135.4 L256.0 135.8 L258.0 136.2 L260.0 136.6 L262.0 137.0M396.0 134.0 L398.0 133.6 L400.0 133.3 L402.0 132.9 L404.0 132.4 L406.0 131.9 L408.0 131.4 L410.0 131.0 L412.0 130.5 L414.0 130.0 L416.0 129.5 L418.0 129.0 L420.0 128.5 L422.0 128.1 L424.0 127.6 L426.0 127.1 L428.0 126.6 L430.0 126.1 L432.0 125.6 L434.0 125.2 L436.0 124.7 L438.0 124.1 L440.0 123.1 L442.0 122.1 L444.0 121.1 L446.0 120.1 L448.0 119.0 L450.0 118.0 L452.0 117.0 L454.0 116.0 L456.0 115.0 L458.0 114.0 L460.0 112.7 L462.0 110.9 L464.0 109.2 L466.0 107.4 L468.0 105.6 L470.0 103.9 L472.0 100.7 L474.0 95.3M172.0 105.8 L174.0 113.7 L176.0 116.3 L178.0 119.0 L180.0 121.6 L182.0 124.2 L184.0 125.6 L186.0 126.7 L188.0 127.8 L190.0 128.9 L192.0 130.1 L194.0 131.2 L196.0 132.3 L198.0 133.4 L200.0 134.5 L202.0 135.6 L204.0 136.5 L206.0 137.1 L208.0 137.8 L210.0 138.4 L212.0 139.1 L214.0 139.8 L216.0 140.4 L218.0 141.1 L220.0 141.8 L222.0 142.4 L224.0 143.1 L226.0 143.8 L228.0 144.4 L230.0 145.0 L232.0 145.4 L234.0 145.8 L236.0 146.2 L238.0 146.6 L240.0 147.0 L242.0 147.4 L244.0 147.8 L246.0 148.2 L248.0 148.6 L250.0 149.0 L252.0 149.4 L254.0 149.8 L256.0 150.2 L258.0 150.6 L260.0 151.0 L262.0 151.4M396.0 148.4 L398.0 148.1 L400.0 147.8 L402.0 147.4 L404.0 146.9 L406.0 146.4 L408.0 145.9 L410.0 145.4 L412.0 145.0 L414.0 144.5 L416.0 144.0 L418.0 143.5 L420.0 143.0 L422.0 142.5 L424.0 142.0 L426.0 141.6 L428.0 141.1 L430.0 140.6 L432.0 140.1 L434.0 139.6 L436.0 139.1 L438.0 138.6 L440.0 137.6 L442.0 136.5 L444.0 135.5 L446.0 134.5 L448.0 133.5 L450.0 132.4 L452.0 131.4 L454.0 130.4 L456.0 129.3 L458.0 128.3 L460.0 127.0 L462.0 125.3 L464.0 123.5 L466.0 121.8 L468.0 120.0 L470.0 118.2 L472.0 115.0 L474.0 109.6M172.0 121.2 L174.0 128.3 L176.0 130.9 L178.0 133.5 L180.0 136.1 L182.0 138.6 L184.0 140.0 L186.0 141.1 L188.0 142.2 L190.0 143.4 L192.0 144.5 L194.0 145.6 L196.0 146.7 L198.0 147.8 L200.0 149.0 L202.0 150.1 L204.0 150.9 L206.0 151.6 L208.0 152.2 L210.0 152.9 L212.0 153.5 L214.0 154.2 L216.0 154.9 L218.0 155.5 L220.0 156.2 L222.0 156.8 L224.0 157.5 L226.0 158.2 L228.0 158.8 L230.0 159.4 L232.0 159.8 L234.0 160.2 L236.0 160.6 L238.0 161.0 L240.0 161.4 L242.0 161.8 L244.0 162.2 L246.0 162.6 L248.0 163.1 L250.0 163.5 L252.0 163.9 L254.0 164.3 L256.0 164.7 L258.0 165.1 L260.0 165.5 L262.0 165.9M396.0 162.9 L398.0 162.6 L400.0 162.3 L402.0 161.8 L404.0 161.4 L406.0 160.9 L408.0 160.4 L410.0 159.9 L412.0 159.4 L414.0 158.9 L416.0 158.5 L418.0 158.0 L420.0 157.5 L422.0 157.0 L424.0 156.5 L426.0 156.0 L428.0 155.6 L430.0 155.1 L432.0 154.6 L434.0 154.1 L436.0 153.6 L438.0 153.1 L440.0 152.0 L442.0 151.0 L444.0 150.0 L446.0 148.9 L448.0 147.9 L450.0 146.8 L452.0 145.8 L454.0 144.8 L456.0 143.7 L458.0 142.7 L460.0 141.4 L462.0 139.6 L464.0 137.9 L466.0 136.1 L468.0 134.4 L470.0 132.6 L472.0 129.4 L474.0 123.9M172.0 136.5 L174.0 142.8 L176.0 145.4 L178.0 148.0 L180.0 150.5 L182.0 153.1 L184.0 154.4 L186.0 155.5 L188.0 156.7 L190.0 157.8 L192.0 158.9 L194.0 160.0 L196.0 161.1 L198.0 162.3 L200.0 163.4 L202.0 164.5 L204.0 165.3 L206.0 166.0 L208.0 166.6 L210.0 167.3 L212.0 168.0 L214.0 168.6 L216.0 169.3 L218.0 169.9 L220.0 170.6 L222.0 171.3 L224.0 171.9 L226.0 172.6 L228.0 173.2 L230.0 173.8 L232.0 174.2 L234.0 174.6 L236.0 175.0 L238.0 175.4 L240.0 175.9 L242.0 176.3 L244.0 176.7 L246.0 177.1 L248.0 177.5 L250.0 177.9 L252.0 178.3 L254.0 178.7 L256.0 179.1 L258.0 179.5 L260.0 179.9 L262.0 180.3M396.0 177.4 L398.0 177.0 L400.0 176.7 L402.0 176.3 L404.0 175.8 L406.0 175.3 L408.0 174.9 L410.0 174.4 L412.0 173.9 L414.0 173.4 L416.0 172.9 L418.0 172.4 L420.0 172.0 L422.0 171.5 L424.0 171.0 L426.0 170.5 L428.0 170.0 L430.0 169.5 L432.0 169.1 L434.0 168.6 L436.0 168.1 L438.0 167.5 L440.0 166.5 L442.0 165.4 L444.0 164.4 L446.0 163.3 L448.0 162.3 L450.0 161.2 L452.0 160.2 L454.0 159.1 L456.0 158.1 L458.0 157.0 L460.0 155.7 L462.0 154.0 L464.0 152.2 L466.0 150.5 L468.0 148.7 L470.0 147.0 L472.0 143.7 L474.0 138.2M172.0 151.9 L174.0 157.4 L176.0 159.9 L178.0 162.5 L180.0 165.0 L182.0 167.5 L184.0 168.8 L186.0 169.9 L188.0 171.1 L190.0 172.2 L192.0 173.3 L194.0 174.4 L196.0 175.6 L198.0 176.7 L200.0 177.8 L202.0 178.9 L204.0 179.8 L206.0 180.4 L208.0 181.1 L210.0 181.7 L212.0 182.4 L214.0 183.0 L216.0 183.7 L218.0 184.4 L220.0 185.0 L222.0 185.7 L224.0 186.3 L226.0 187.0 L228.0 187.6 L230.0 188.2 L232.0 188.6 L234.0 189.0 L236.0 189.4 L238.0 189.9 L240.0 190.3 L242.0 190.7 L244.0 191.1 L246.0 191.5 L248.0 191.9 L250.0 192.3 L252.0 192.7 L254.0 193.1 L256.0 193.5 L258.0 193.9 L260.0 194.3 L262.0 194.8M396.0 191.8 L398.0 191.5 L400.0 191.2 L402.0 190.8 L404.0 190.3 L406.0 189.8 L408.0 189.3 L410.0 188.8 L412.0 188.4 L414.0 187.9 L416.0 187.4 L418.0 186.9 L420.0 186.4 L422.0 185.9 L424.0 185.5 L426.0 185.0 L428.0 184.5 L430.0 184.0 L432.0 183.5 L434.0 183.0 L436.0 182.6 L438.0 182.0 L440.0 181.0 L442.0 179.9 L444.0 178.8 L446.0 177.8 L448.0 176.7 L450.0 175.6 L452.0 174.6 L454.0 173.5 L456.0 172.5 L458.0 171.4 L460.0 170.1 L462.0 168.3 L464.0 166.6 L466.0 164.8 L468.0 163.1 L470.0 161.3 L472.0 158.1 L474.0 152.5M172.0 167.2 L174.0 171.9 L176.0 174.4 L178.0 177.0 L180.0 179.5 L182.0 182.0 L184.0 183.2 L186.0 184.4 L188.0 185.5 L190.0 186.6 L192.0 187.7 L194.0 188.9 L196.0 190.0 L198.0 191.1 L200.0 192.3 L202.0 193.4 L204.0 194.2 L206.0 194.9 L208.0 195.5 L210.0 196.2 L212.0 196.8 L214.0 197.5 L216.0 198.1 L218.0 198.8 L220.0 199.4 L222.0 200.1 L224.0 200.7 L226.0 201.4 L228.0 202.0 L230.0 202.6 L232.0 203.0 L234.0 203.4 L236.0 203.9 L238.0 204.3 L240.0 204.7 L242.0 205.1 L244.0 205.5 L246.0 205.9 L248.0 206.3 L250.0 206.7 L252.0 207.1 L254.0 207.6 L256.0 208.0 L258.0 208.4 L260.0 208.8 L262.0 209.2M396.0 206.3 L398.0 206.0 L400.0 205.7 L402.0 205.3 L404.0 204.8 L406.0 204.3 L408.0 203.8 L410.0 203.3 L412.0 202.8 L414.0 202.3 L416.0 201.9 L418.0 201.4 L420.0 200.9 L422.0 200.4 L424.0 199.9 L426.0 199.4 L428.0 199.0 L430.0 198.5 L432.0 198.0 L434.0 197.5 L436.0 197.0 L438.0 196.5 L440.0 195.4 L442.0 194.3 L444.0 193.3 L446.0 192.2 L448.0 191.1 L450.0 190.0 L452.0 189.0 L454.0 187.9 L456.0 186.8 L458.0 185.7 L460.0 184.4 L462.0 182.7 L464.0 180.9 L466.0 179.2 L468.0 177.4 L470.0 175.7 L472.0 172.4 L474.0 166.8M172.0 182.6 L174.0 186.4 L176.0 189.0 L178.0 191.5 L180.0 194.0 L182.0 196.4 L184.0 197.6 L186.0 198.8 L188.0 199.9 L190.0 201.0 L192.0 202.2 L194.0 203.3 L196.0 204.4 L198.0 205.6 L200.0 206.7 L202.0 207.8 L204.0 208.6 L206.0 209.3 L208.0 209.9 L210.0 210.6 L212.0 211.2 L214.0 211.9 L216.0 212.5 L218.0 213.2 L220.0 213.8 L222.0 214.5 L224.0 215.1 L226.0 215.8 L228.0 216.4 L230.0 217.0 L232.0 217.4 L234.0 217.9 L236.0 218.3 L238.0 218.7 L240.0 219.1 L242.0 219.5 L244.0 219.9 L246.0 220.3 L248.0 220.7 L250.0 221.2 L252.0 221.6 L254.0 222.0 L256.0 222.4 L258.0 222.8 L260.0 223.2 L262.0 223.6M396.0 220.8 L398.0 220.5 L400.0 220.2 L402.0 219.7 L404.0 219.2 L406.0 218.8 L408.0 218.3 L410.0 217.8 L412.0 217.3 L414.0 216.8 L416.0 216.3 L418.0 215.9 L420.0 215.4 L422.0 214.9 L424.0 214.4 L426.0 213.9 L428.0 213.4 L430.0 212.9 L432.0 212.5 L434.0 212.0 L436.0 211.5 L438.0 211.0 L440.0 209.9 L442.0 208.8 L444.0 207.7 L446.0 206.6 L448.0 205.5 L450.0 204.4 L452.0 203.4 L454.0 202.3 L456.0 201.2 L458.0 200.1 L460.0 198.8 L462.0 197.0 L464.0 195.3 L466.0 193.5 L468.0 191.8 L470.0 190.0 L472.0 186.7 L474.0 181.2M172.0 197.9 L174.0 201.0 L176.0 203.5 L178.0 206.0 L180.0 208.5 L182.0 210.9 L184.0 212.0 L186.0 213.2 L188.0 214.3 L190.0 215.5 L192.0 216.6 L194.0 217.7 L196.0 218.9 L198.0 220.0 L200.0 221.1 L202.0 222.3 L204.0 223.1 L206.0 223.7 L208.0 224.4 L210.0 225.0 L212.0 225.7 L214.0 226.3 L216.0 227.0 L218.0 227.6 L220.0 228.3 L222.0 228.9 L224.0 229.6 L226.0 230.2 L228.0 230.8 L230.0 231.4 L232.0 231.8 L234.0 232.3 L236.0 232.7 L238.0 233.1 L240.0 233.5 L242.0 233.9 L244.0 234.3 L246.0 234.7 L248.0 235.2 L250.0 235.6 L252.0 236.0 L254.0 236.4 L256.0 236.8 L258.0 237.2 L260.0 237.7 L262.0 238.1M396.0 235.2 L398.0 234.9 L400.0 234.6 L402.0 234.2 L404.0 233.7 L406.0 233.2 L408.0 232.7 L410.0 232.3 L412.0 231.8 L414.0 231.3 L416.0 230.8 L418.0 230.3 L420.0 229.8 L422.0 229.4 L424.0 228.9 L426.0 228.4 L428.0 227.9 L430.0 227.4 L432.0 226.9 L434.0 226.4 L436.0 226.0 L438.0 225.4 L440.0 224.3 L442.0 223.2 L444.0 222.1 L446.0 221.0 L448.0 219.9 L450.0 218.8 L452.0 217.7 L454.0 216.7 L456.0 215.6 L458.0 214.5 L460.0 213.1 L462.0 211.4 L464.0 209.6 L466.0 207.9 L468.0 206.1 L470.0 204.4 L472.0 201.1 L474.0 195.5" stroke-dasharray="2 2.500"/></g><g fill="none" stroke="#808080" stroke-width="1" stroke-linejoin="bevel" shape-rendering="crispEdges"><path d="M171.4 56.3 L179.6 43.7 L197.5 32.5 L222.7 23.6 L254.7 16.2 L285.2 12.1 L324.0 11.0 L365.6 13.6 L400.6 18.7 L430.3 25.8 L454.9 37.0 L469.0 48.1 L475.7 62.2"/><path d="M171.4 56.3 L173.7 69.7 L182.6 81.6 L202.7 92.7 L229.4 101.7 L262.9 108.3 L297.8 112.1 L324.0 112.8 L365.6 109.8 L400.6 104.3 L437.8 95.3 L459.3 84.6 L471.2 74.1 L475.7 62.2"/><path d="M475.4 205.8 L471.2 217.7 L459.3 228.1 L437.8 240.0 L400.6 249.0 L365.6 254.2 L324.0 256.7 L297.8 256.1 L262.9 252.7 L229.4 245.7 L202.7 237.1 L181.8 225.2 L172.2 213.3"/><path d="M171.6 56V213.3M475.6 62V206"/><path d="M197.5 32.5V89.8"/><path d="M222.7 23.6V99.4"/><path d="M254.7 16.2V106.7"/><path d="M365.6 13.6V109.8"/><path d="M400.6 18.7V104.3"/><path d="M430.3 25.8V97.1"/><path d="M202.7 92.7V237.1"/><path d="M229.4 101.7V245.7"/><path d="M262.9 108.3V252.7"/><path d="M337.0 111.9V255.9"/><path d="M437.8 95.3V240.0"/></g><path d="M326.5 112.8V256.7" stroke="#8a0a9a" stroke-width="1" shape-rendering="crispEdges"/><path d="M474 69l2-6 2.500 0 1 3-2.500 4z" fill="#8a0a9a"/><path d="M475.5 70V205" stroke="#a01aa8" stroke-width="1" opacity=".8" shape-rendering="crispEdges"/></svg>
<div class="pt" style="left:302px;top:590px;font-size:14.400px;line-height:20px;font-family:'Noto Sans CJK JP',sans-serif">平板要素断面力</div>
<div class="pt" style="left:328px;top:611px;font-size:10.800px;line-height:16px">PlateSoilDisp1</div>
<div class="pt" style="left:328px;top:629px;font-size:11.500px;line-height:16px">移動方向 Nx' - 両方</div>
<!-- axes -->
<svg class="a" style="left:318px;top:725px" width="82" height="90" viewBox="0 0 82 90">
<path d="M37.500 60V25" stroke="#0aa00a" stroke-width="1.900"/><path d="M34.800 32l2.700-8 2.700 8-2.700 3z" fill="#0aa00a"/>
<path d="M37.500 60L12 68.700" stroke="#ff1212" stroke-width="1.900"/><path d="M17 65l-7.500 5 7 .8 3.500-1.800-.5-3z" fill="#ff1212"/>
<path d="M37.500 60L63.500 69" stroke="#1a9aff" stroke-width="1.900"/><path d="M58.500 65l7.500 5-7 .8-3.500-1.800.5-3z" fill="#1a9aff"/>
<text x="30" y="16" font-family="IPAGothic,Liberation Mono,monospace" font-size="16.500" fill="#0aa00a">Y</text>
<text x="2.500" y="63.500" font-family="IPAGothic,Liberation Mono,monospace" font-size="16.500" fill="#ff1212">Z</text>
<text x="65.500" y="86.800" font-family="IPAGothic,Liberation Mono,monospace" font-size="16.500" fill="#1a9aff">X</text>
</svg>
<div class="a" style="left:942px;top:585px;width:112px;height:260px;background:#000;border-left:1px solid #e8e8e8;overflow:hidden"><svg class="a" style="left:0;top:0" width="111" height="280" viewBox="0 0 111 280"><rect x="4.500" y="40.5" width="33" height="17" fill="#ff0000" stroke="#fff" stroke-width="1.500"/><rect x="4.500" y="57.5" width="33" height="17" fill="#ff0000" stroke="#fff" stroke-width="1.500"/><rect x="4.500" y="74.5" width="33" height="17" fill="#ff5500" stroke="#fff" stroke-width="1.500"/><rect x="4.500" y="91.5" width="33" height="17" fill="#ffaa00" stroke="#fff" stroke-width="1.500"/><rect x="4.500" y="108.5" width="33" height="17" fill="#ffff00" stroke="#fff" stroke-width="1.500"/><rect x="4.500" y="125.5" width="33" height="17" fill="#aaff00" stroke="#fff" stroke-width="1.500"/><rect x="4.500" y="142.5" width="33" height="17" fill="#55ff00" stroke="#fff" stroke-width="1.500"/><rect x="4.500" y="159.5" width="33" height="17" fill="#00ff00" stroke="#fff" stroke-width="1.500"/><rect x="4.500" y="176.5" width="33" height="17" fill="#00ff55" stroke="#fff" stroke-width="1.500"/><rect x="4.500" y="193.5" width="33" height="17" fill="#00ffaa" stroke="#fff" stroke-width="1.500"/><rect x="4.500" y="210.5" width="33" height="17" fill="#00ffff" stroke="#fff" stroke-width="1.500"/><rect x="4.500" y="227.5" width="33" height="17" fill="#00aadd" stroke="#fff" stroke-width="1.500"/><rect x="4.500" y="244.5" width="33" height="17" fill="#0055bb" stroke="#fff" stroke-width="1.500"/><rect x="4.500" y="261.5" width="33" height="17" fill="#0000a0" stroke="#fff" stroke-width="1.500"/><rect x="4.500" y="278.5" width="33" height="17" fill="#0000a0" stroke="#fff" stroke-width="1.500"/></svg><div class="lg" style="right:5px;top:13px;font-size:18px;line-height:18px">kN/m</div><div class="lg" style="left:72px;top:33px;font-size:13px;line-height:12px">+</div><div class="lg" style="left:87px;top:33px;font-size:13px;line-height:12px">∞</div><div class="lg" style="right:11px;top:50.5px;font-size:12px;line-height:12px">4.128E+04</div><div class="lg" style="right:11px;top:67.5px;font-size:12px;line-height:12px">3.493E+04</div><div class="lg" style="right:11px;top:84.5px;font-size:12px;line-height:12px">2.858E+04</div><div class="lg" style="right:11px;top:101.5px;font-size:12px;line-height:12px">2.223E+04</div><div class="lg" style="right:11px;top:118.5px;font-size:12px;line-height:12px">1.588E+04</div><div class="lg" style="right:11px;top:135.5px;font-size:12px;line-height:12px">9.526E+03</div><div class="lg" style="right:11px;top:152.5px;font-size:12px;line-height:12px">3.175E+03</div><div class="lg" style="right:11px;top:169.5px;font-size:12px;line-height:12px">-3.175E+03</div><div class="lg" style="right:11px;top:186.5px;font-size:12px;line-height:12px">-9.526E+03</div><div class="lg" style="right:11px;top:203.5px;font-size:12px;line-height:12px">-1.588E+04</div><div class="lg" style="right:11px;top:220.5px;font-size:12px;line-height:12px">-2.223E+04</div><div class="lg" style="right:11px;top:237.5px;font-size:12px;line-height:12px">-2.858E+04</div><div class="lg" style="right:11px;top:254.5px;font-size:12px;line-height:12px">-3.493E+04</div><div class="lg" style="right:11px;top:271.5px;font-size:12px;line-height:12px">-4.128E+04</div></div>
<!-- scrollbars -->
<div class="a" style="left:1054px;top:585px;width:17px;height:260px;background:#f0f0f0"></div>
<div class="a" style="left:1055px;top:620px;width:15px;height:185px;background:#cdcdcd"></div>
<svg class="a" style="left:1057px;top:590px" width="10" height="7" viewBox="0 0 10 7"><path d="M1 5.500l4-4 4 4" stroke="#4a4a4a" stroke-width="2" fill="none"/></svg>
<svg class="a" style="left:1057px;top:833px" width="10" height="7" viewBox="0 0 10 7"><path d="M1 1.500l4 4 4-4" stroke="#4a4a4a" stroke-width="2" fill="none"/></svg>
<div class="a" style="left:296px;top:845px;width:758px;height:17px;background:#f0f0f0"></div>
<div class="a" style="left:445px;top:846px;width:459px;height:15px;background:#cdcdcd"></div>
<svg class="a" style="left:301px;top:848px" width="7" height="10" viewBox="0 0 7 10"><path d="M5.500 1l-4 4 4 4" stroke="#4a4a4a" stroke-width="2" fill="none"/></svg>
<svg class="a" style="left:1042px;top:848px" width="7" height="10" viewBox="0 0 7 10"><path d="M1.500 1l4 4-4 4" stroke="#4a4a4a" stroke-width="2" fill="none"/></svg>
<div class="a" style="left:296px;top:862px;width:775px;height:22px;border-top:1px solid #d4d4d4;border-right:1px solid #d4d4d4;background:#f0f0f0"></div>
<!-- window border -->
<div class="a" style="left:0;top:31px;width:1px;height:855px;background:#0063b1"></div>
<div class="a" style="left:1075px;top:31px;width:1px;height:855px;background:#0063b1"></div>
<div class="a" style="left:0;top:885px;width:1076px;height:1px;background:#0063b1"></div>
</body>
</html>
